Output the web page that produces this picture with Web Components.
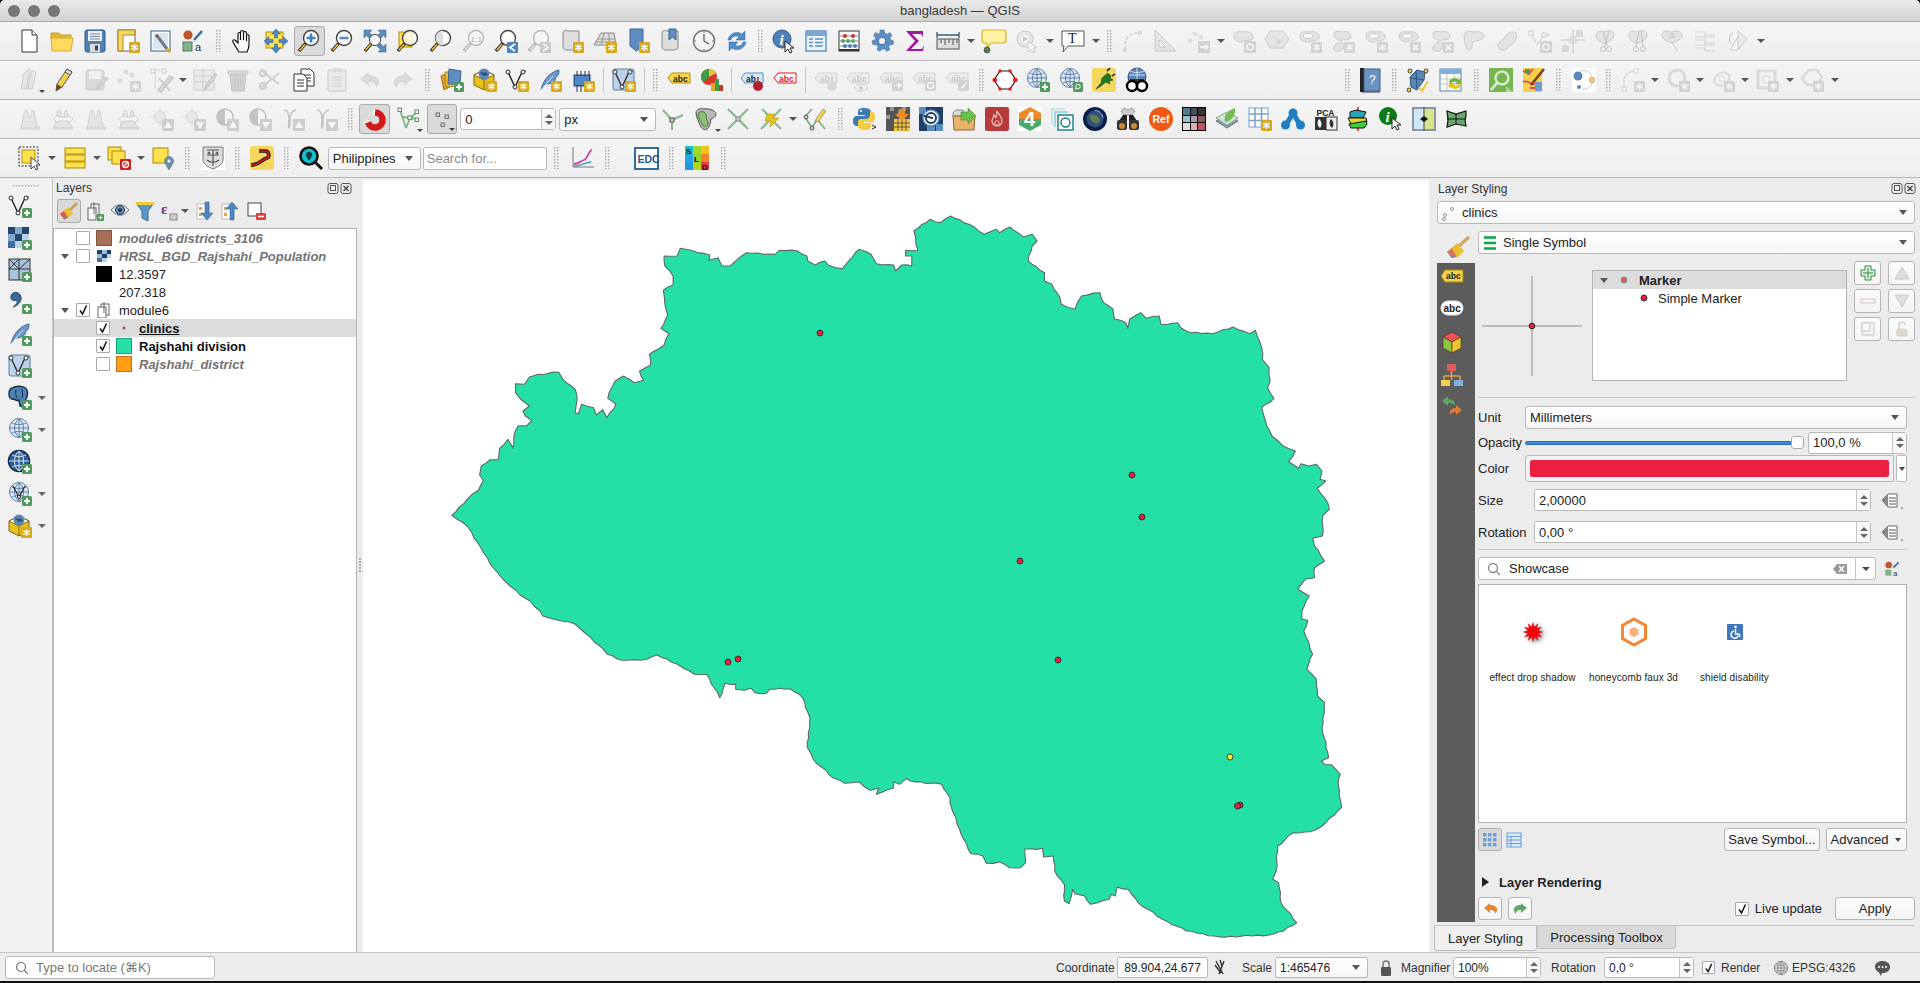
<!DOCTYPE html>
<html>
<head>
<meta charset="utf-8">
<title>bangladesh — QGIS</title>
<style>
html { background: #111; }
body { margin: 0; height: 983px; overflow: hidden; font: 13px "Liberation Sans", Arial, sans-serif; color: #222; }
</style>
</head>
<body>
<q-window>
  <q-titlebar slot="title">bangladesh — QGIS</q-titlebar>

  <q-toolbar slot="tools" style="padding-left:12.5px">
    <q-tool i="new"></q-tool><q-tool i="open"></q-tool><q-tool i="save"></q-tool><q-tool i="layout"></q-tool><q-tool i="layoutmgr"></q-tool><q-tool i="stylemgr"></q-tool>
    <q-grip w="17"></q-grip>
    <q-tool i="hand"></q-tool><q-tool i="pansel"></q-tool><q-tool i="zoomin" on></q-tool><q-tool i="zoomout"></q-tool><q-tool i="zoomfull"></q-tool><q-tool i="zoomsel"></q-tool><q-tool i="zoomlayer"></q-tool><q-tool i="zoom11" off></q-tool><q-tool i="zoomlast"></q-tool><q-tool i="zoomnext" off></q-tool><q-tool i="mapview"></q-tool><q-tool i="map3d"></q-tool><q-tool i="bookmarknew"></q-tool><q-tool i="bookmarks"></q-tool><q-tool i="clock"></q-tool><q-tool i="refresh"></q-tool>
    <q-grip w="14"></q-grip>
    <q-tool i="identify"></q-tool><q-tool i="table"></q-tool><q-tool i="abacus"></q-tool><q-tool i="gear"></q-tool><q-tool i="sigma"></q-tool><q-tool i="ruler"></q-tool><q-drop></q-drop><q-tool i="tip"></q-tool><q-tool i="action" off></q-tool><q-drop></q-drop><q-tool i="annot"></q-tool><q-drop></q-drop>
    <q-grip w="14"></q-grip>
    <q-tool i="nodecurve" off></q-tool><q-tool i="setsquare" off></q-tool><q-tool i="ptsarrow" off></q-tool><q-drop></q-drop>
    <q-tool i="blobback" off></q-tool><q-tool i="blobhole" off></q-tool><q-tool i="blobstar" off></q-tool><q-tool i="blobsstar" off></q-tool><q-tool i="ringstar" off></q-tool><q-tool i="ringx" off></q-tool><q-tool i="blobsx" off></q-tool><q-tool i="blob" off></q-tool><q-tool i="leaf" off></q-tool><q-tool i="vertexloop" off></q-tool><q-tool i="split" off></q-tool><q-tool i="scissor" off></q-tool><q-tool i="scissor2" off></q-tool><q-tool i="merge" off></q-tool><q-tool i="rowsgrid" off></q-tool><q-tool i="rotate" off></q-tool><q-drop></q-drop>
  </q-toolbar>

  <q-toolbar slot="tools" style="padding-left:13.5px">
    <q-tool i="pencils" off small></q-tool><q-tool i="pencil"></q-tool><q-tool i="saveedit" off></q-tool><q-tool i="ptsstar" off></q-tool><q-tool i="xtool" off></q-tool><q-drop w="11"></q-drop><q-tool i="edittable" off></q-tool><q-tool i="trash" off></q-tool><q-tool i="cut" off></q-tool><q-tool i="copy"></q-tool><q-tool i="paste" off></q-tool><q-tool i="undo" off></q-tool><q-tool i="redo" off></q-tool>
    <q-grip w="16"></q-grip>
    <q-tool i="addlayers"></q-tool><q-tool i="gpkg"></q-tool><q-tool i="vstar"></q-tool><q-tool i="featherstar"></q-tool><q-tool i="chip"></q-tool>
    <q-sep w="8"></q-sep>
    <q-tool i="vbox"></q-tool>
    <q-sep w="8"></q-sep><q-grip w="14"></q-grip>
    <q-tool i="abcy"></q-tool><q-tool i="pie"></q-tool><q-sep w="7"></q-sep><q-tool i="abpin"></q-tool><q-tool i="abcr"></q-tool><q-sep w="8"></q-sep>
    <q-tool i="abpinoff" off></q-tool><q-tool i="abeye" off></q-tool><q-tool i="abarrow" off></q-tool><q-tool i="abloop" off></q-tool><q-tool i="abbrush" off></q-tool>
    <q-grip w="15"></q-grip>
    <q-tool i="hexred"></q-tool><q-tool i="wmsplus"></q-tool><q-tool i="wmssearch"></q-tool><q-tool i="plug"></q-tool><q-tool i="globebino"></q-tool>
    <q-gap w="187"></q-gap>
    <q-grip w="14"></q-grip><q-tool i="help"></q-tool><q-grip w="15"></q-grip><q-tool i="leafcheck"></q-tool><q-tool i="tablesync"></q-tool><q-grip w="17"></q-grip><q-tool i="osmsearch"></q-tool><q-tool i="mapbrush"></q-tool><q-grip w="17"></q-grip><q-tool i="orbit"></q-tool><q-grip w="16"></q-grip>
    <q-tool i="curvestar" off></q-tool><q-drop w="12"></q-drop><q-tool i="circlestar" off></q-tool><q-drop w="12"></q-drop><q-tool i="ellipsestar" off></q-tool><q-drop w="12"></q-drop><q-tool i="rectstar" off></q-tool><q-drop w="12"></q-drop><q-tool i="polystar" off></q-tool><q-drop w="12"></q-drop>
  </q-toolbar>

  <q-toolbar slot="tools" style="padding-left:13.5px">
    <q-tool i="hills" off></q-tool><q-tool i="hillsarrow" off></q-tool><q-tool i="hills" off></q-tool><q-tool i="hillsarrow" off></q-tool><q-tool i="sunup" off></q-tool><q-tool i="sundown" off></q-tool><q-tool i="contrastup" off></q-tool><q-tool i="contrastdown" off></q-tool><q-tool i="gammaup" off></q-tool><q-tool i="gammadown" off></q-tool>
    <q-grip w="16"></q-grip>
    <q-tool i="magnet" on></q-tool><q-tool i="topology" small></q-tool><q-gap w="3"></q-gap>
    <q-tool i="dots" on small style="width:30px"></q-tool><q-gap w="3"></q-gap>
    <q-spin style="width:96px">0</q-spin><q-gap w="3"></q-gap>
    <q-combo style="width:97px">px</q-combo>
    <q-tool i="trimy"></q-tool><q-tool i="shapeg" small></q-tool><q-tool i="crossg"></q-tool><q-tool i="bolt"></q-tool><q-drop w="11"></q-drop><q-tool i="linepen"></q-tool>
    <q-grip w="17"></q-grip>
    <q-tool i="python"></q-tool><q-tool i="rasterarrow"></q-tool><q-tool i="bluetile"></q-tool><q-tool i="foldergreen"></q-tool><q-tool i="flame"></q-tool><q-tool i="hex4"></q-tool><q-tool i="teal"></q-tool><q-tool i="earth"></q-tool><q-tool i="binoc"></q-tool><q-tool i="refo"></q-tool><q-tool i="matrix"></q-tool><q-tool i="stackleaf"></q-tool><q-tool i="gridstar"></q-tool><q-tool i="bluea"></q-tool><q-tool i="pca"></q-tool><q-tool i="strata"></q-tool><q-tool i="greeni"></q-tool><q-tool i="splitview"></q-tool><q-tool i="greenmap"></q-tool>
  </q-toolbar>

  <q-toolbar slot="tools" style="padding-left:13.5px">
    <q-tool i="selectrect"></q-tool><q-drop w="12"></q-drop><q-tool i="selectrows"></q-tool><q-drop w="11"></q-drop><q-tool i="deselect"></q-tool><q-drop w="11"></q-drop><q-tool i="selectpin"></q-tool>
    <q-grip w="17"></q-grip><q-tool i="crest"></q-tool><q-grip w="17"></q-grip><q-tool i="road"></q-tool><q-grip w="16"></q-grip><q-tool i="geosearch"></q-tool>
    <q-combo style="width:93px">Philippines</q-combo><q-gap w="2"></q-gap>
    <q-input style="width:124px;color:#8a8a8a">Search for...</q-input>
    <q-grip w="20"></q-grip><q-tool i="chart"></q-tool><q-grip w="16"></q-grip><q-gap w="14"></q-gap><q-tool i="edc"></q-tool><q-grip w="18"></q-grip><q-tool i="sld"></q-tool><q-grip w="20"></q-grip>
  </q-toolbar>

  <q-sidebar slot="left">
    <q-tool i="vplus" tall></q-tool><q-tool i="rasterplus" tall></q-tool><q-tool i="meshplus" tall></q-tool><q-tool i="commaplus" tall></q-tool><q-tool i="featherplus" tall></q-tool><q-tool i="vboxplus" tall></q-tool>
    <q-tool i="pg" tall drop></q-tool><q-tool i="wmsplus" tall drop></q-tool><q-tool i="globedark" tall></q-tool><q-tool i="wfs" tall drop></q-tool><q-tool i="gpkg" tall drop></q-tool>
  </q-sidebar>

  <q-dock slot="layers" title="Layers">
    <q-layer-tools></q-layer-tools>
    <q-tree>
      <q-row lvl="0" box swatch="#a76f58" dim>module6 districts_3106</q-row>
      <q-row lvl="0" arrow box ic="rastersmall" dim>HRSL_BGD_Rajshahi_Population</q-row>
      <q-row lvl="0" swatch="#000">12.3597</q-row>
      <q-row lvl="0" swatch="#fff" noborder>207.318</q-row>
      <q-row lvl="0" arrow box checked ic="groupsmall" plain>module6</q-row>
      <q-row lvl="1" box checked ic="dotsmall" bold under selected>clinics</q-row>
      <q-row lvl="1" box checked swatch="#24dfa6" bold>Rajshahi division</q-row>
      <q-row lvl="1" box swatch="#ff9d17" dim>Rajshahi_district</q-row>
    </q-tree>
  </q-dock>

  <q-map slot="map"></q-map>

  <q-styling slot="right"></q-styling>

  <q-statusbar slot="status"></q-statusbar>
</q-window>

<script>
const define = (tag, css, html) => customElements.define(tag, class extends HTMLElement {
  constructor() {
    super();
    this.attachShadow({mode: 'open'}).innerHTML = `<style>${css}</style>${html}`;
  }
});

// shared icon pieces
const STAR = `<g transform="translate(13,13)"><rect width="11" height="11" rx="1" fill="#d8a81e"/><path d="M5.5 2v7M2.3 3.7l6.4 3.6M8.7 3.7L2.3 7.3" stroke="#fff" stroke-width="1.4"/></g>`;
const PLUS = `<g transform="translate(14,14)"><rect width="10" height="10" rx="1.5" fill="#4f9a5d"/><path d="M5 2v6M2 5h6" stroke="#fff" stroke-width="2"/></g>`;
const GSTAR = `<g transform="translate(13,13)"><rect width="11" height="11" rx="1" fill="#999"/><path d="M5.5 2v7M2.3 3.7l6.4 3.6M8.7 3.7L2.3 7.3" stroke="#fff" stroke-width="1.4"/></g>`;
const GX = `<g transform="translate(13,13)"><rect width="11" height="11" rx="1" fill="#999"/><path d="M3 3l5 5M8 3l-5 5" stroke="#fff" stroke-width="1.8"/></g>`;
const lens = (inner = '', fill = '#fff') => `<circle cx="14" cy="9" r="7.5" fill="${fill}" stroke="#444" stroke-width="1.4"/>${inner}<path d="M8.5 14.5L2 22" stroke="#222" stroke-width="3.4"/><path d="M8 15.2L2.8 21.2" stroke="#f2c230" stroke-width="1.7"/>`;
const V = (c = '#222') => `<path d="M3 4l7 15 7-15" fill="none" stroke="${c}" stroke-width="1.4"/><circle cx="3" cy="4" r="2" fill="#fff" stroke="${c}"/><circle cx="10" cy="19" r="2" fill="#fff" stroke="${c}"/><path d="M17 4l4-1" stroke="${c}"/><circle cx="18" cy="4" r="2" fill="#fff" stroke="${c}"/>`;
const FEATHER = `<path d="M3 22C5 12 12 4 21 2c0 5-2 7-4 8 1 1 0 3-2 4-3 2-6 2-8 2z" fill="#6d97c9" stroke="#41699c"/><path d="M3 22L15 8" stroke="#dce8f6"/>`;
const GLOBE = `<circle cx="11" cy="10" r="9.5" fill="#dfe8f4" stroke="#5c7ea8"/><path d="M2 10h18M11 1v18M4 5c4 2 10 2 14 0M4 15c4-2 10-2 14 0M11 1c-6 4-6 14 0 18M11 1c6 4 6 14 0 18" fill="none" stroke="#5c7ea8"/>`;
const BOX = `<path d="M11 2l10 5v10l-10 5-10-5V7z" fill="#e8c21b" stroke="#7a6510"/><path d="M1 7l10 5 10-5-10-5z" fill="#fff" stroke="#7a6510"/><circle cx="11" cy="6" r="5.5" fill="#5d87b5"/><path d="M7 5c2-2 4 1 6-1l2 3-4 1z" fill="#2f4f75"/><path d="M11 12v10" stroke="#7a6510"/>`;
const ABCTAG = (fill, stroke, txt = 'abc', tc = '#222') => `<path d="M1 10l4-5h18v10H5z" fill="${fill}" stroke="${stroke}"/><text x="6" y="13.5" font-size="8.5" font-weight="700" fill="${tc}">${txt}</text>`;
const BLOB = `<path d="M2 7c0-4 5-5 9-4 4-1 10 0 10 5 0 4-5 3-8 4-3 2-11 1-11-5z" fill="#c8c8c8" stroke="#777"/>`;
const RING = `<path d="M2 7c0-4 5-5 9-4 4-1 10 0 10 5 0 4-5 3-8 4-3 2-11 1-11-5z" fill="#c8c8c8" stroke="#777"/><ellipse cx="10" cy="7" rx="5" ry="2.5" fill="#fff" stroke="#777"/>`;
const TWOBLOBS = `<path d="M3 5c0-3 5-3 8-2 4-1 9 0 9 4 0 3-3 4-7 4-4 1-10 0-10-6z" fill="#c8c8c8" stroke="#777"/><path d="M3 18c1-4 6-6 9-4 2 2 1 8-4 8-3 0-6 0-5-4z" fill="#c8c8c8" stroke="#777"/>`;
const HILL = `<path d="M2 21c3 0 3-18 6-18s2 10 4 8 1-8 3-8 2 18 7 18z" fill="#ccc" stroke="#888"/><path d="M2 22h20" stroke="#888"/>`;
const SUN = `<circle cx="10" cy="10" r="5.5" fill="#e4d28a" stroke="#b09b50"/><path d="M10 1v3M10 16v3M1 10h3M3.5 3.5l2 2M16.5 3.5l-2 2M3.5 16.5l2-2" stroke="#b09b50"/>`;
const CONTRAST = `<circle cx="10" cy="10" r="8" fill="#fff" stroke="#555" stroke-width="1.4"/><path d="M10 2a8 8 0 0 0 0 16z" fill="#666"/>`;
const GAMMA = `<path d="M3 3c4 0 5 5 5 9s-1 9 0 9 1-5 1-9 2-9 6-9" fill="none" stroke="#666" stroke-width="1.5"/>`;
const UPBOX = `<g transform="translate(12,12)"><rect width="12" height="12" rx="1" fill="#888"/><path d="M6 2l4 7H2z" fill="#fff"/></g>`;
const DOWNBOX = `<g transform="translate(12,12)"><rect width="12" height="12" rx="1" fill="#888"/><path d="M6 10l4-7H2z" fill="#fff"/></g>`;
const PAGE = `<path d="M5 1h10l5 5v17H5z" fill="#fff" stroke="#333"/><path d="M15 1v5h5" fill="#eee" stroke="#333"/>`;
const SCROLL = `<path d="M3 3c2-2 3-2 5-1h11v17c-2 2-4 2-6 2H7c-2 0-4-1-4-3z" fill="#dedede" stroke="#888"/>`;

const ICONS = {
  new: PAGE,
  open: `<path d="M1 6V4h8l2 2h10v4H1z" fill="#e3b73a" stroke="#c79a22"/><path d="M1 9h22l-2 13H2z" fill="#ffda5e" stroke="#d8a93a"/>`,
  save: `<rect x="2" y="1" width="20" height="22" rx="2" fill="#4f7fb3" stroke="#2f5d8f"/><rect x="5" y="2" width="14" height="10" fill="#edf1f6"/><path d="M7 5h10M7 7.5h10M7 10h10" stroke="#7b8a9c"/><rect x="7" y="15" width="10" height="8" fill="#dcdcdc"/><rect x="12" y="16.5" width="3" height="5" fill="#345"/>`,
  layout: `<rect x="2" y="1" width="17" height="21" fill="#fff" stroke="#666"/><path d="M2 1h17v5H7v16H2z" fill="#f6d860" stroke="#a8892c"/>${STAR}`,
  layoutmgr: `<rect x="2" y="2" width="19" height="20" fill="#fff" stroke="#3b5a86"/><rect x="4" y="4" width="15" height="16" fill="#dbe6f5"/><path d="M9 8l9 12" stroke="#777" stroke-width="3"/><path d="M7 6l2 2" stroke="#555" stroke-width="3"/><path d="M18 20l3 3" stroke="#d8a81e" stroke-width="3"/>`,
  stylemgr: `<circle cx="7" cy="6" r="4.6" fill="#c1562b"/><path d="M13 11l8-9" stroke="#3a6ea5" stroke-width="2.5"/><rect x="2" y="13" width="9" height="9" fill="#7fb08a" stroke="#5b7a63"/><text x="14" y="22" font-size="11" fill="#333">a</text>`,
  hand: `<path d="M8 23c-2-3-5-8-6-10-1-2 1-3 2.5-1.5L7 14V5c0-2 2.5-2 2.5 0v6V3c0-2 3-2 3 0v8V4c0-2 3-2 3 0v8-5c0-2 2.5-2 2.5 0v9c0 3-1 5-2 7z" fill="#fff" stroke="#111" stroke-width="1.2"/>`,
  pansel: `<rect x="2" y="3" width="17" height="16" fill="#ffe14d" stroke="#b09000"/><path d="M12 0l4.5 5h-3v4h-3V5h-3zM12 24l4.5-5h-3v-4h-3v4h-3zM0 12l5-4.500v3h4v3H5v3zM24 12l-5-4.500v3h-4v3h4v3z" fill="#4f86c0" stroke="#2c5d8f" stroke-width=".5"/>`,
  zoomin: lens(`<path d="M14 4.5v9M9.500 9h9" stroke="#3f7fbf" stroke-width="2.6"/>`),
  zoomout: lens(`<path d="M9.500 9h9" stroke="#5a8ab8" stroke-width="2.6"/>`),
  zoomfull: `<path d="M1 1h8L6.5 3.5 10 7 7 10 3.5 6.5 1 9zM23 1v8l-2.5-2.5L17 10l-3-3 3.5-3.5L15 1zM23 23h-8l2.5-2.5L14 17l3-3 3.5 3.5L23 15z" fill="#5b8dbf" stroke="#2c5d8f" stroke-width=".5"/><circle cx="12" cy="11" r="5.5" fill="#fff" stroke="#444"/><path d="M8 15l-6 7" stroke="#222" stroke-width="3.4"/><path d="M7.5 15.5l-5 5.5" stroke="#f2c230" stroke-width="1.7"/>`,
  zoomsel: `<rect x="3" y="3" width="13" height="15" fill="#ffe14d" stroke="#b09000"/>${lens('', 'rgba(255,255,255,.8)')}`,
  zoomlayer: lens(`<path d="M14 1.5a7.500 7.500 0 0 0 0 15z" fill="#ddd"/>`),
  zoom11: lens(`<text x="8.5" y="12.5" font-size="8" font-weight="700" fill="#555">1:1</text>`),
  zoomlast: lens() + `<rect x="13" y="13" width="11" height="11" fill="#4a85c2"/><path d="M21 15l-5 3.5 5 3.5" stroke="#fff" fill="none" stroke-width="1.8"/>`,
  zoomnext: lens() + `<rect x="13" y="13" width="11" height="11" fill="#4a85c2"/><path d="M16 15l5 3.5-5 3.5" stroke="#fff" fill="none" stroke-width="1.8"/>`,
  mapview: `${SCROLL}${STAR}`,
  map3d: `<path d="M1 16L8 4h13l2 12z" fill="#ddd" stroke="#888"/><path d="M5 10h17M2 13h21M11 4l-3 12M16 4v12" stroke="#999"/>${STAR}`,
  bookmarknew: `<path d="M4 0h13v17l-6.5 5L4 17z" fill="#5f8dc2" stroke="#3a6494"/>${STAR}`,
  bookmarks: `${SCROLL}<path d="M10 0h7v11l-3.5-3L10 11z" fill="#5f8dc2" stroke="#3a6494"/>`,
  clock: `<circle cx="12" cy="12" r="10.5" fill="#f3f3f3" stroke="#777" stroke-width="1.4"/><path d="M12 5v7l5 3" stroke="#555" stroke-width="1.2" fill="none"/><path d="M12 2v2M12 20v2M2 12h2M20 12h2" stroke="#777"/>`,
  refresh: `<path d="M3 11C4 5 11 1 17 5l3-3v9h-9l3-3C11 6 7 7 6 11z" fill="#4f8cc9" stroke="#2c6299" stroke-width=".5"/><path d="M21 13c-1 6-8 10-14 6l-3 3v-9h9l-3 3c3 2 7 1 8-3z" fill="#4f8cc9" stroke="#2c6299" stroke-width=".5"/>`,
  identify: `<circle cx="10" cy="10" r="9" fill="#4f7fb8" stroke="#2d588c"/><text x="7.5" y="15.5" font-size="15" font-weight="700" font-style="italic" fill="#fff" font-family="Liberation Serif">i</text><path d="M13 12v11l3-3 2 4 2-1-2-4h4z" fill="#fff" stroke="#222"/>`,
  table: `<rect x="2" y="2" width="20" height="20" fill="#eef4fb" stroke="#5b8dc0" stroke-width="1.4"/><rect x="2" y="2" width="20" height="5" fill="#7ba6d4"/><path d="M5 10h4M5 13.5h4M5 17h4M11 10h8M11 13.5h8M11 17h8" stroke="#5b8dc0" stroke-width="1.5"/>`,
  abacus: `<rect x="2" y="2" width="20" height="20" fill="#fff" stroke="#333"/><path d="M2 21h20" stroke="#333" stroke-width="2"/><path d="M3 7h18M3 12h18M3 17h18" stroke="#888"/><g fill="#c0392b"><circle cx="8" cy="7" r="2"/><circle cx="16" cy="7" r="2"/></g><g fill="#5ba56a"><circle cx="6" cy="12" r="2"/><circle cx="11" cy="12" r="2"/><circle cx="16" cy="12" r="2"/></g><g fill="#4f7fb8"><circle cx="8" cy="17" r="2"/><circle cx="13" cy="17" r="2"/><circle cx="18" cy="17" r="2"/></g>`,
  gear: `<path d="M10 1h4l.6 3 2.6 1.200L20 3.600 22 6.400l-2 2.200.6 2.400 2.900 1-.5 3.400-3 .2-1.400 2.200 1.200 2.800-3 1.600-2-2.300-2.800 0-2 2.300-3-1.600 1.200-2.800L5.800 15.600l-3-.2L2 12l3-1 .6-2.400-2-2.200L5.600 3.600l2.800 1.600L10 4z" fill="#5d8fc6" stroke="#3a6a9e" stroke-width=".6"/><circle cx="12" cy="12" r="3.8" fill="#f0f0f0" stroke="#3a6a9e"/>`,
  sigma: `<path d="M3 2h17v6l-2-3H9l7 7-8 8h11l2-4-1 6H3l9-10z" fill="#a0169c"/>`,
  ruler: `<rect x="1" y="10" width="22" height="10" fill="#ddd" stroke="#555"/><path d="M5 10v4M9 10v6M13 10v4M17 10v6M21 10v4" stroke="#555"/><path d="M1 6h22M1 3v6M23 3v6" stroke="#3c5b7a" stroke-width="1.3"/>`,
  tip: `<path d="M3 1h18c2 0 3 1 3 3v7c0 2-1 3-3 3H9l-4 5v-5H3c-2 0-3-1-3-3V4c0-2 1-3 3-3z" fill="#fff3a3" stroke="#d3b32b" stroke-width="1.2"/><circle cx="5" cy="21" r="3" fill="#5b7f4f" stroke="#333" stroke-width=".6"/>`,
  action: `<circle cx="10" cy="10" r="8" fill="#ccc" stroke="#777"/><circle cx="10" cy="10" r="4" fill="#fff"/><path d="M8 7l5 3-5 3z" fill="#777"/><path d="M13 12v11l3-3 2 4 2-1-2-4h4z" fill="#fff" stroke="#888"/>`,
  annot: `<path d="M1 2h22v15H7l-5 6 1-6H1z" fill="#fff" stroke="#555"/><text x="7" y="14" font-size="14" font-family="Liberation Serif" fill="#222">T</text>`,
  nodecurve: `<path d="M4 20C3 10 8 4 18 4" fill="none" stroke="#777" stroke-dasharray="3 2" stroke-width="1.4"/><rect x="2" y="19" width="4" height="4" fill="#aaa"/><rect x="17" y="2" width="4" height="4" fill="#aaa"/>`,
  setsquare: `<path d="M2 1v21h21zM6 11l7 7H6z" fill="#ccc" fill-rule="evenodd" stroke="#777"/>`,
  ptsarrow: `<circle cx="4" cy="12" r="2.5" fill="#bbb"/><circle cx="9" cy="5" r="2.5" fill="#bbb"/><circle cx="15" cy="8" r="2.5" fill="#bbb"/><rect x="12" y="12" width="12" height="12" fill="#999"/><path d="M14 17h5v-3l4 4-4 4v-3h-5z" fill="#fff"/>`,
  blobback: `${BLOB}<g transform="translate(12,12)"><rect width="12" height="12" rx="1" fill="#999"/><circle cx="6" cy="6" r="3" fill="none" stroke="#fff" stroke-width="1.5"/></g>`,
  blobhole: `<path d="M5 2h13l6 8-6 9H5L0 10z" fill="#ccc" stroke="#888"/><path d="M8 7l7 7M15 14h-4M15 14v-4" stroke="#888"/>`,
  blobstar: `${RING}${GSTAR}`,
  blobsstar: `${TWOBLOBS}${GSTAR}`,
  ringstar: `${RING}${GSTAR}`,
  ringx: `${RING}${GX}`,
  blobsx: `${TWOBLOBS}${GX}`,
  blob: `<path d="M2 7c0-5 6-5 10-4 4-1 10 0 10 4 0 5-8 4-11 6-1 3-1 8-4 8S2 12 2 7z" fill="#c8c8c8" stroke="#777"/>`,
  leaf: `<path d="M3 16c1-4 6-5 8-9s7-5 10-3c2 4-1 8-3 10-3 3-7 8-12 7-3-1-3-3-3-5z" fill="#c8c8c8" stroke="#777"/>`,
  vertexloop: `<path d="M3 4l6 12 7-10h6" fill="none" stroke="#aaa" stroke-width="1.4"/><rect x="1" y="2" width="4" height="4" fill="#fff" stroke="#888"/><rect x="14" y="4" width="4" height="4" fill="#fff" stroke="#888"/><g transform="translate(12,12)"><rect width="12" height="12" rx="1" fill="#999"/><circle cx="6" cy="6" r="3" fill="none" stroke="#fff" stroke-width="1.5"/></g>`,
  split: `<path d="M0 11h24M12 0v24" stroke="#999" stroke-width="1.5"/><rect x="9" y="8" width="6" height="6" fill="none" stroke="#888"/><rect x="15" y="1" width="7" height="7" fill="#aaa"/><rect x="1" y="16" width="7" height="7" fill="#aaa"/>`,
  scissor: `<path d="M2 6c0-4 5-5 8-3 3-2 10-2 10 3s-5 6-8 8c-5 0-10-2-10-8z" fill="#c8c8c8" stroke="#777"/><path d="M9 2l4 15M15 2l-4 15" stroke="#666"/><circle cx="9" cy="20" r="2.5" fill="none" stroke="#666"/><circle cx="15" cy="20" r="2.5" fill="none" stroke="#666"/>`,
  scissor2: `<path d="M2 6c0-4 5-5 8-3 3-2 10-2 10 3s-5 6-8 8c-5 0-10-2-10-8z" fill="#c8c8c8" stroke="#777"/><path d="M12 2l-3 15M14 2l2 15" stroke="#666"/><circle cx="9" cy="20" r="2.5" fill="none" stroke="#666"/><circle cx="16" cy="20" r="2.5" fill="none" stroke="#666"/>`,
  merge: `<path d="M2 6c0-4 5-5 9-3 4-2 11-1 11 3 0 4-5 6-9 8-5-1-11-3-11-8z" fill="#c8c8c8" stroke="#777"/><path d="M8 5h8M8 8h8M12 3v6M12 14c2 3 4 5 5 8" stroke="#777" fill="none"/>`,
  rowsgrid: `<path d="M2 3h9l2 3h9M2 8h20M2 11h9l2 3h9M2 16h20M2 19h9l2 3h9M12 2v20" fill="none" stroke="#999"/>`,
  rotate: `<path d="M12 21V2l9 8z" fill="#ddd" stroke="#888"/><path d="M12 21L4 21l8-13z" fill="#fff" stroke="#888"/><path d="M7 4C3 7 2 11 5 15" fill="none" stroke="#777" stroke-width="1.2"/>`,

  pencils: `<path d="M3 21l3-16 5-4 2 3-3 16zM8 21l3-15 5-4 2 3-4 16z" fill="#ccc" stroke="#888"/>`,
  pencil: `<path d="M5 23l1-7L16 1l5 3-10 15z" fill="#f2d14b" stroke="#555"/><path d="M5 23l1-7 5 3z" fill="#6b4a22"/><path d="M16 1l5 3-2 3-5-3z" fill="#ddd" stroke="#555"/>`,
  saveedit: `<rect x="2" y="2" width="18" height="20" rx="2" fill="#aaa" stroke="#888"/><rect x="5" y="3" width="12" height="8" fill="#eee"/><path d="M12 22l2-6 8-7 2 2-8 8z" fill="#999" stroke="#777"/>`,
  ptsstar: `<circle cx="3" cy="13" r="2.5" fill="#aaa"/><circle cx="9" cy="4" r="2.5" fill="#aaa"/><circle cx="15" cy="7" r="2.5" fill="#aaa"/>${GSTAR}`,
  xtool: `<path d="M2 2h14M5 2v19" stroke="#999" fill="none"/><rect x="1" y="1" width="4" height="4" fill="#fff" stroke="#888"/><rect x="12" y="1" width="4" height="4" fill="#fff" stroke="#888"/><path d="M8 22l12-14 3 2-12 14zM9 10l11 13" stroke="#777" stroke-width="1.5" fill="#aaa"/>`,
  edittable: `<rect x="1" y="2" width="20" height="20" fill="#ddd" stroke="#888"/><path d="M1 8h20M1 14h20M10 2v20" stroke="#888"/><path d="M11 23l2-6 9-12 2 2-9 12z" fill="#999" stroke="#666"/>`,
  trash: `<path d="M4 7h16l-2 16H6z" fill="#b88" stroke="#766"/><path d="M2 3h20v3H2zM9 10v10M12 10v10M15 10v10" fill="#aaa" stroke="#766"/>`,
  cut: `<path d="M3 3l17 13M3 19L20 5" stroke="#888" stroke-width="2"/><circle cx="4" cy="5" r="3" fill="none" stroke="#888" stroke-width="2"/><circle cx="4" cy="18" r="3" fill="none" stroke="#888" stroke-width="2"/>`,
  copy: `<path d="M9 1h9l4 4v13H9z" fill="#fff" stroke="#333"/><path d="M12 7h7M12 10h7M12 13h7" stroke="#333"/><path d="M2 6h9l4 4v13H2z" fill="#fff" stroke="#333"/><path d="M5 12h7M5 15h7M5 18h7" stroke="#333"/>`,
  paste: `<rect x="3" y="2" width="18" height="21" rx="1" fill="#ddd" stroke="#777"/><rect x="8" y="0" width="8" height="4" fill="#aaa"/><path d="M7 9h10M7 12h10M7 15h10M7 18h10" stroke="#888"/>`,
  undo: `<path d="M11 3L2 11l9 7v-4c4 0 7 1 7 6 3-3 4-6 2-9s-5-4-9-4z" fill="#aaa"/>`,
  redo: `<path d="M13 3l9 8-9 7v-4c-4 0-7 1-7 6-3-3-4-6-2-9s5-4 9-4z" fill="#aaa"/>`,
  addlayers: `<path d="M1 8l9-4 3 13-9 5z" fill="#e79a2e" stroke="#a66a14"/><path d="M5 4h11l1 14-11 1z" fill="#e9c033" stroke="#a68a14"/><path d="M9 1l12 2-1 13-12 0z" fill="#5f8dc2" stroke="#3a6494"/>${PLUS}`,
  gpkg: `${BOX}${STAR}`,
  vstar: `${V()}${STAR}`,
  featherstar: `${FEATHER}${STAR}`,
  chip: `<rect x="3" y="7" width="16" height="11" fill="#3f77b8" stroke="#274f80"/><path d="M6 3v21M10 3v21M14 3v21M18 3v10" stroke="#333"/><rect x="4" y="8" width="14" height="9" fill="#4f87c6"/>${STAR}`,
  vbox: `<rect x="1" y="1" width="21" height="21" rx="2" fill="#bcd2ea" stroke="#557da8"/>${V('#333')}${STAR}`,
  abcy: ABCTAG('#f9d54a', '#b09000'),
  pie: `<circle cx="9" cy="9" r="8" fill="#d83b2e"/><path d="M9 9V1a8 8 0 0 1 7 4z" fill="#f2c230"/><path d="M9 9L3 14a8 8 0 0 1-2-5z" fill="#3c9f4a"/><path d="M9 9L1 9a8 8 0 0 1 8-8z" fill="#3c9f4a"/><rect x="11" y="15" width="4" height="8" fill="#e6a81e"/><rect x="15" y="11" width="4" height="12" fill="#3c9f4a"/><rect x="19" y="17" width="4" height="6" fill="#c0392b"/>`,
  abpin: `${ABCTAG('#d7e8fa', '#4f8cc9', 'ab')}<path d="M18 9v6" stroke="#777" stroke-width="2"/><circle cx="18" cy="18" r="5" fill="#b11f2c"/>`,
  abcr: ABCTAG('#fff', '#e0171f', 'abc', '#e0171f'),
  abpinoff: `${ABCTAG('#ddd', '#999', 'ab', '#777')}<path d="M18 9v6" stroke="#888" stroke-width="2"/><circle cx="18" cy="18" r="5" fill="#aaa"/>`,
  abeye: `${ABCTAG('#ddd', '#999', 'abc', '#777')}<path d="M8 20c4-5 10-5 14 0-4 4-10 4-14 0z" fill="#fff" stroke="#888"/><circle cx="15" cy="20" r="2" fill="#888"/>`,
  abarrow: `${ABCTAG('#ddd', '#999', 'abc', '#777')}<rect x="13" y="12" width="11" height="11" fill="#999"/><path d="M15 17h4v-3l4 3.5-4 3.500v-3h-4z" fill="#fff"/>`,
  abloop: `${ABCTAG('#ddd', '#999', 'abc', '#777')}<rect x="13" y="12" width="11" height="11" fill="#999"/><circle cx="18.5" cy="17.5" r="3" fill="none" stroke="#fff" stroke-width="1.5"/>`,
  abbrush: `${ABCTAG('#ddd', '#999', 'abc', '#777')}<rect x="13" y="12" width="11" height="11" fill="#999"/><path d="M15 21l2-3 5-4-3 5z" fill="#fff"/>`,
  hexred: `<path d="M7 3h10l6 9-6 9H7L1 12z" fill="#fff" stroke="#222" stroke-width="1.2"/><g fill="#e61717"><circle cx="7" cy="3" r="1.7"/><circle cx="17" cy="3" r="1.7"/><circle cx="17" cy="21" r="1.7"/><circle cx="7" cy="21" r="1.7"/><circle cx="1.8" cy="12" r="2.3"/><circle cx="22.2" cy="12" r="2.3"/></g>`,
  wmsplus: `${GLOBE}${PLUS}`,
  wmssearch: `${GLOBE}<g transform="translate(14,14)"><rect width="10" height="10" rx="1.5" fill="#4f9a5d"/><circle cx="5" cy="4.5" r="2.2" fill="none" stroke="#fff"/><path d="M3.5 6L2 8" stroke="#fff"/></g>`,
  plug: `<rect x="0" y="0" width="24" height="24" rx="3" fill="#f5d75e"/><path d="M4 21l5-6 1-5 6-5 3 3-1 2 3 2-4 1 1 3-4-2-4 3-1 1z" fill="#1e7a1e" stroke="#0c3d0c" stroke-width=".6"/><path d="M15 3l3-3M20 8l3-2" stroke="#111" stroke-width="1.5"/>`,
  globebino: `<circle cx="12" cy="9" r="9" fill="#5a84b5" stroke="#2d5380"/><path d="M4 7h16M12 0v18M5 3c4 2 10 2 14 0" stroke="#d3e1f1" fill="none"/><path d="M5 11h14v4H5z" fill="#333"/><circle cx="7" cy="18" r="5" fill="#fff" stroke="#000" stroke-width="2.4"/><circle cx="17" cy="18" r="5" fill="#fff" stroke="#000" stroke-width="2.4"/>`,
  help: `<rect x="2" y="0" width="4" height="24" fill="#222"/><rect x="6" y="1" width="16" height="22" fill="#6b93c2" stroke="#3a5f8a"/><text x="11" y="16" font-size="12" fill="#fff">?</text><path d="M4 24h18" stroke="#333"/>`,
  leafcheck: `<path d="M4 9L11 2l8 2-1 8-7 10-6-3z" fill="#5d87b5" stroke="#2d5380"/><path d="M10 3l1 17M5 10l13 2" stroke="#2d5380"/><circle cx="4" cy="3" r="2" fill="#f2d14b" stroke="#444"/><circle cx="20" cy="3" r="2" fill="#f2d14b" stroke="#444"/><circle cx="3" cy="22" r="2" fill="#f2d14b" stroke="#444"/><path d="M13 19l3 4 6-10" fill="none" stroke="#f2c230" stroke-width="2"/>`,
  tablesync: `<rect x="1" y="1" width="21" height="22" fill="#fffbe6" stroke="#4f86c0"/><rect x="1" y="1" width="21" height="5" fill="#7fb1df"/><path d="M1 11h21M1 16h21M8 6v17M15 6v17" stroke="#b9c9dc"/><path d="M10 14c1-4 7-5 10-2l2-2v6h-6l2-2c-2-1-5-1-6 2z" fill="#6cb33f"/><path d="M22 17c-1 4-7 5-10 2l-2 2v-6h6l-2 2c2 1 5 1 6-2z" fill="#e8c21b"/>`,
  osmsearch: `<rect width="24" height="24" fill="#78b654"/><circle cx="13" cy="10" r="6.5" fill="none" stroke="#e6f3dc" stroke-width="2.2"/><path d="M8 15l-6 7" stroke="#e6f3dc" stroke-width="2.6"/><path d="M17 18l7 6h-7z" fill="#a6d98b"/>`,
  mapbrush: `<rect x="1" y="0" width="19" height="24" fill="#f4cf4a"/><path d="M1 3l6 3 4-5M1 14c5-3 8 4 13 2M8 20h10" stroke="#d9486b" stroke-width="1.8" fill="none"/><rect x="3" y="1" width="5" height="4" fill="#4aa14a"/><rect x="13" y="14" width="7" height="9" fill="#6e9bd0"/><path d="M9 17L22 1" stroke="#7a4320" stroke-width="2.6"/>`,
  orbit: `<rect width="24" height="24" fill="#fff"/><circle cx="6" cy="8" r="4.5" fill="#5d87b5"/><circle cx="7" cy="19" r="2" fill="#5d87b5"/><circle cx="20" cy="12" r="2" fill="none" stroke="#ef9a2a" stroke-width="1.4"/><path d="M8 3c6-2 11 1 12 7M20 15c-1 5-5 7-10 6" fill="none" stroke="#ccc"/>`,
  curvestar: `<path d="M3 21V13C3 7 8 3 15 3" fill="none" stroke="#aaa" stroke-width="1.5"/><rect x="1" y="19" width="4" height="4" fill="#fff" stroke="#999"/><rect x="13" y="1" width="4" height="4" fill="#fff" stroke="#999"/>${GSTAR}`,
  circlestar: `<circle cx="11" cy="10" r="8" fill="none" stroke="#aaa" stroke-width="3"/>${GSTAR}`,
  ellipsestar: `<ellipse cx="11" cy="11" rx="8" ry="6" fill="none" stroke="#aaa" stroke-width="2" transform="rotate(-30 11 11)"/><circle cx="11" cy="11" r="3" fill="none" stroke="#aaa"/>${GSTAR}`,
  rectstar: `<rect x="3" y="3" width="17" height="17" fill="none" stroke="#aaa" stroke-width="3"/><rect x="8" y="8" width="7" height="7" fill="none" stroke="#aaa"/>${GSTAR}`,
  polystar: `<path d="M9 2h8l5 7-4 8H7L2 10z" fill="none" stroke="#aaa" stroke-width="2.5"/>${GSTAR}`,

  hills: HILL,
  hillsarrow: `${HILL}<path d="M2 12l5-4v2h10V8l5 4-5 4v-2H7v2z" fill="#fff" stroke="#888"/>`,
  sunup: `${SUN}${UPBOX}`, sundown: `${SUN}${DOWNBOX}`,
  contrastup: `${CONTRAST}${UPBOX}`, contrastdown: `${CONTRAST}${DOWNBOX}`,
  gammaup: `${GAMMA}${UPBOX}`, gammadown: `${GAMMA}${DOWNBOX}`,
  magnet: `<path d="M12 5.500a7.500 7.500 0 1 1-7 10" fill="none" stroke="#d41818" stroke-width="6.500"/><path d="M8 4.500l4 1M2.500 12l1.500 3.500" stroke="#f2f2f2" stroke-width="5"/><path d="M8.500 2l.3 5.500M1 13.500l5.500-1.500" stroke="#999" stroke-width=".4"/>`,
  topology: `<path d="M4 3l6 18M10 21l4-10 7-6M14 11l7 1M7 10l7 1" fill="none" stroke="#7bb582" stroke-width="1.8"/><g fill="#fff" stroke="#5b8c62"><rect x="2" y="1" width="3.5" height="3.5"/><rect x="12" y="9" width="3.5" height="3.5"/><rect x="19" y="3" width="3.5" height="3.5"/><rect x="19" y="11" width="3.5" height="3.5"/></g>`,
  dots: `<g fill="#cfcfcf" stroke="#777"><rect x="6" y="6" width="3.5" height="3.5"/><rect x="15" y="8" width="3.5" height="3.5"/><rect x="11" y="16" width="3.5" height="3.5"/></g>`,
  trimy: `<path d="M11 13L2 3M11 13v10M11 13l11-5" stroke="#86b98e" stroke-width="2" fill="none"/><rect x="9" y="11" width="4" height="4" fill="#ccc" stroke="#555"/>`,
  shapeg: `<path d="M2 6c0-4 5-5 8-4 3-1 12 1 12 5 0 3-3 4-5 5-1 4-1 8-4 10s-6-1-7-4-4-8-4-12z" fill="#b8b8b8" stroke="#555"/><path d="M4 8c0-3 3-4 6-3 2 1 3 3 2 5l2 6c0 3-3 5-5 3-1-2-5-8-5-11z" fill="#8ebd7a" stroke="#4d7f3c"/>`,
  crossg: `<path d="M2 2l20 20M22 2L2 22" stroke="#86b98e" stroke-width="2.2"/><rect x="10" y="10" width="4" height="4" fill="#ccc" stroke="#888"/>`,
  bolt: `<path d="M2 22L22 2M3 2l7 7M15 15l7 7" stroke="#86b98e" stroke-width="2"/><path d="M8 7h7l-1 4h6l-9 9 1-6H6z" fill="#e5c21e" stroke="#a08410" stroke-width=".5"/>`,
  linepen: `<path d="M2 10l7 11 5-9 8 10M2 10l7-8" fill="none" stroke="#7bb582" stroke-width="1.8"/><circle cx="9" cy="21" r="2" fill="#ccc" stroke="#555"/><circle cx="3" cy="10" r="2" fill="#ccc" stroke="#555"/><path d="M13 12l7-10 3 2-7 10-3 1z" fill="#f2d14b" stroke="#777" stroke-width=".6"/>`,
  python: `<path d="M11 1c-5 0-6 2-6 4v3h7v1H4c-2 0-4 1-4 5s2 5 4 5h2v-3c0-2 2-4 4-4h5c2 0 3-1 3-3V5c0-2-2-4-7-4z" fill="#3d7ab3"/><path d="M12 23c5 0 6-2 6-4v-3h-7v-1h8c2 0 3-1 3-5s-2-5-3-5h-2v3c0 2-2 4-4 4H8c-2 0-3 1-3 3v4c0 2 2 4 7 4z" fill="#f4cd3f"/><circle cx="8" cy="4" r="1" fill="#fff"/><path d="M19 18l4 2-4 2" fill="none" stroke="#333"/>`,
  rasterarrow: `<rect x="0" y="0" width="24" height="24" fill="#555"/><path d="M4 0h4v4H4zM12 4h4v4h-4zM0 8h4v4H0zM8 12h4v4H8zM16 0h4v4h-4z" fill="#999"/><path d="M8 12h16v12H8z" fill="#f4c542"/><path d="M8 16h16M8 20h16M12 12v12M16 12v12M20 12v12" stroke="#333" stroke-width=".7"/><path d="M13 2h6v5h4l-7 7-7-7h4z" fill="#ef8c28"/>`,
  bluetile: `<rect width="24" height="24" fill="#1f3f66"/><path d="M0 0h7v7H0zM17 17h7v7h-7zM8 16h8v8H8z" fill="#5b8cbf"/><circle cx="12" cy="11" r="8" fill="#fff" stroke="#5b8cbf" stroke-width="1.5"/><circle cx="12" cy="11" r="5" fill="#fff" stroke="#1f3f66" stroke-width="2"/><path d="M5 9c4 0 6 2 9 2" stroke="#1f3f66" stroke-width="2"/>`,
  foldergreen: `<path d="M1 6l3-3h7l2 3v3H1z" fill="#ddd" stroke="#888"/><path d="M1 9h22l-1 14H2z" fill="#e8b36b" stroke="#8a6a35"/><path d="M9 5h7V1l8 8-8 8v-4H9z" fill="#69c14a" stroke="#3f8a28" stroke-width=".6"/>`,
  flame: `<rect x="0" y="0" width="24" height="24" rx="2" fill="#b83b3b"/><path d="M12 4c1 3 5 5 5 10a5 5 0 0 1-10 0c0-3 2-3 2-6 1 1 2 2 2 3 1-2 1-5 1-7z" fill="none" stroke="#eec5b8" stroke-width="1.2"/><circle cx="12" cy="16" r="2.2" fill="none" stroke="#eec5b8"/>`,
  hex4: `<rect width="24" height="24" fill="#fff"/><path d="M12 0l11 6v6H1V6z" fill="#ef8c28"/><path d="M1 12h22v6l-11 6-11-6z" fill="#4fa86a"/><text x="6" y="19" font-size="20" font-weight="700" fill="#fff">4</text>`,
  teal: `<path d="M1 1h14v2H3v14H1z" fill="#c8e4ea"/><path d="M4 4h14v2H6v14H4z" fill="#a9d5dd"/><rect x="8" y="8" width="15" height="15" fill="#fff" stroke="#157a85" stroke-width="1.4"/><circle cx="15.5" cy="15.5" r="4.5" fill="none" stroke="#157a85" stroke-width="1.4"/>`,
  earth: `<circle cx="12" cy="12" r="12" fill="#0b1e4a"/><circle cx="12" cy="12" r="8.5" fill="#2f4f7a"/><path d="M6 9c3-3 7-1 9 1s3 5 0 6-7-1-9-7z" fill="#5d7e4f"/><path d="M12 3.5c4 0 7 3 8 7" stroke="#9ec3e6" fill="none"/>`,
  binoc: `<path d="M8 1l4 2 4-2 3 3-3 4H8L5 4z" fill="#ccc" stroke="#999"/><path d="M7 8h4v6H3zM13 8h4l4 6h-8z" fill="#222"/><rect x="1" y="13" width="10" height="10" rx="2" fill="#333"/><rect x="13" y="13" width="10" height="10" rx="2" fill="#333"/><circle cx="6" cy="19" r="3" fill="#c88a3a"/><circle cx="18" cy="19" r="3" fill="#c88a3a"/>`,
  refo: `<circle cx="12" cy="12" r="12" fill="#f05a14"/><text x="3.5" y="16" font-size="10.5" font-weight="700" fill="#fff">Ref</text>`,
  matrix: `<rect width="24" height="24" fill="#000"/><g><rect x="1" y="1" width="7" height="7" fill="#4f7d8f"/><rect x="9" y="1" width="6" height="7" fill="#40505f"/><rect x="16" y="1" width="7" height="7" fill="#3a3030"/><rect x="1" y="9" width="7" height="6" fill="#9dc2d0"/><rect x="9" y="9" width="6" height="6" fill="#a89aa6"/><rect x="16" y="9" width="7" height="6" fill="#8a5a62"/><rect x="1" y="16" width="7" height="7" fill="#e0e0e0"/><rect x="9" y="16" width="6" height="7" fill="#d6b4b4"/><rect x="16" y="16" width="7" height="7" fill="#c0545e"/></g>`,
  stackleaf: `<path d="M1 14l11-6 11 6-11 7z" fill="#8e9aa5" stroke="#6b7680"/><path d="M1 11l11-6 11 6-11 7z" fill="#cfe7d8" stroke="#88a898"/><path d="M10 15C8 8 13 3 20 1c1 7-3 13-10 14z" fill="#76bb55"/>`,
  gridstar: `<rect x="1" y="1" width="19" height="19" fill="#fff" stroke="#7ca0c8"/><path d="M7 1v19M13.5 1v19M1 7h19M1 13.5h19" stroke="#7ca0c8" stroke-width="1.5"/>${STAR}`,
  bluea: `<path d="M5 18L12 6l7 12" fill="none" stroke="#1f7fc4" stroke-width="5"/><circle cx="12" cy="6" r="4.5" fill="#1f7fc4"/><circle cx="4.5" cy="18" r="4.5" fill="#1f7fc4"/><circle cx="19.5" cy="18" r="4.5" fill="#1f7fc4"/>`,
  pca: `<text x="2.5" y="8.5" font-size="8.5" font-weight="700" fill="#222">PCA</text><rect x="1" y="10" width="11" height="13" fill="#333"/><rect x="12" y="10" width="11" height="13" fill="#eee" stroke="#333"/><path d="M5 12c3 2 3 7 1 9-3-2-3-7-1-9z" fill="#fff"/><path d="M17 12c3 2 3 7 1 9-3-2-3-7-1-9z" fill="#333"/>`,
  strata: `<path d="M12 0v24" stroke="#e01212" stroke-width="1.5"/><path d="M4 5l6-2 10 2-3 6H4z" fill="#2aa3b8" stroke="#111"/><path d="M2 11h18l1 4-16 2z" fill="#e8d91e" stroke="#111"/><path d="M3 17l17-3 1 3-3 4H5z" fill="#3fce3f" stroke="#111"/>`,
  greeni: `<circle cx="9" cy="9" r="9" fill="#0b7a17"/><text x="6.5" y="14.5" font-size="15" font-weight="700" font-style="italic" fill="#fff" font-family="Liberation Serif">i</text><path d="M13 11v11l3-3 2 4 2-1-2-4h4z" fill="#fff" stroke="#222"/>`,
  splitview: `<rect x="0" y="0" width="24" height="24" fill="#8c95a3"/><rect x="2" y="2" width="10" height="20" fill="#cfe6f7"/><rect x="12" y="2" width="10" height="20" fill="#d5e58a"/><path d="M12 0v24" stroke="#444"/><path d="M12 9l-4 3 4 3zM12 9l4 3-4 3z" fill="#111"/>`,
  greenmap: `<path d="M2 4l9 3 10-3v5l-1 4 1 6-10-2-9 3 1-7z" fill="#6ba76e" stroke="#111" stroke-width="1.2"/><path d="M2 12h19M11 7v10" stroke="#111"/>`,

  selectrect: `<rect x="1" y="1" width="19" height="19" fill="none" stroke="#222" stroke-dasharray="2 1.5"/><rect x="4" y="4" width="13" height="13" fill="#ffe14d" stroke="#b09000"/><path d="M13 11v12l3-3 2 4 2-1-2-4h4z" fill="#fff" stroke="#444"/>`,
  selectrows: `<g fill="#ffe14d" stroke="#a88a00"><rect x="2" y="2" width="20" height="6"/><rect x="2" y="9" width="20" height="6"/><rect x="2" y="16" width="20" height="6"/></g>`,
  deselect: `<rect x="1" y="1" width="13" height="13" fill="#ffe14d" stroke="#a88a00"/><rect x="5" y="5" width="13" height="13" fill="#ffe14d" stroke="#a88a00"/><rect x="13" y="13" width="11" height="11" rx="1" fill="#d61d1d"/><circle cx="18.5" cy="18.5" r="3" fill="none" stroke="#fff" stroke-width="1.3"/><path d="M16 21l5-5" stroke="#fff" stroke-width="1.3"/>`,
  selectpin: `<rect x="2" y="2" width="15" height="15" fill="#ffe14d" stroke="#a88a00"/><path d="M18 24l-4-7a4.500 4.500 0 1 1 8 0z" fill="#6a93a8" stroke="#4a6f82" stroke-width=".6"/><circle cx="18" cy="15" r="1.5" fill="#fff"/>`,
  crest: `<rect width="24" height="24" fill="#fff"/><path d="M2 1h20v13c0 4-5 7-10 9-5-2-10-5-10-9z" fill="#ddd" stroke="#777"/><path d="M6 4h12M6 9h12M12 4v16M6 14c3 3 9 3 12 0" stroke="#555" stroke-width="1.2" fill="none"/><circle cx="8" cy="7" r="1.5" fill="#666"/><circle cx="16" cy="7" r="1.5" fill="#666"/>`,
  road: `<rect width="24" height="24" rx="3" fill="#f5d75e"/><path d="M1 19C9 19 11 14 17 12c3-1 2-6-1-7H9" fill="none" stroke="#111" stroke-width="3.6"/><path d="M1 19C9 19 11 14 17 12c3-1 2-6-1-7H9" fill="none" stroke="#e0201b" stroke-width="1.7"/>`,
  geosearch: `<circle cx="10" cy="10" r="8.5" fill="#12c3d6" stroke="#111" stroke-width="2.6"/><path d="M16 16l7 7" stroke="#111" stroke-width="3"/><path d="M10 15l-3-5a3.200 3.200 0 1 1 6 0z" fill="#173b3f"/>`,
  chart: `<path d="M2 1v20h21" fill="none" stroke="#777"/><path d="M3 18c6 0 6-3 10-4 4-1 4-9 8-10" fill="none" stroke="#c43aa3" stroke-width="1.8"/><path d="M3 20c6 0 10-3 17-4" fill="none" stroke="#3aa0b8" stroke-width="1.5"/>`,
  edc: `<rect x="1" y="2" width="23" height="21" fill="#fff" stroke="#1f5c8f" stroke-width="1.8"/><text x="3.5" y="17" font-size="10.5" font-weight="700" fill="#1f5c8f">EDC</text>`,
  sld: `<rect width="8" height="8" fill="#12c3d6"/><rect x="8" width="8" height="8" fill="#a6d62a"/><rect x="16" width="8" height="8" fill="#f4c31a"/><rect y="8" width="8" height="8" fill="#22a5e2"/><rect x="8" y="8" width="8" height="8" fill="#8fd42a"/><rect x="16" y="8" width="8" height="8" fill="#f2832a"/><rect y="16" width="8" height="8" fill="#1f9adf"/><rect x="8" y="16" width="8" height="8" fill="#b0d61e"/><rect x="16" y="16" width="8" height="8" fill="#e23b4a"/><text x="1" y="7.5" font-size="8" font-weight="700">S</text><text x="9" y="15.5" font-size="8" font-weight="700">L</text><text x="17" y="23.5" font-size="8" font-weight="700">D</text>`,

  vplus: `${V()}${PLUS}`,
  rasterplus: `<rect x="0" y="1" width="7" height="7" fill="#24476f"/><rect x="7" y="1" width="7" height="7" fill="#84a6cc"/><rect x="14" y="1" width="7" height="7" fill="#24476f"/><rect x="0" y="8" width="7" height="7" fill="#84a6cc"/><rect x="7" y="8" width="7" height="7" fill="#24476f"/><rect x="14" y="8" width="7" height="7" fill="#bcd0e6"/><rect x="0" y="15" width="7" height="7" fill="#3f6ea3"/><rect x="7" y="15" width="7" height="7" fill="#bcd0e6"/>${PLUS}`,
  meshplus: `<rect x="1" y="1" width="21" height="21" fill="#a9c2dd" stroke="#333"/><path d="M1 11h21M11 1v21M1 1l10 10M11 1l-10 10M22 1L11 11" stroke="#333" fill="none"/>${PLUS}`,
  commaplus: `<path d="M3 6c1-5 9-5 10 1 1 5-4 9-8 10 3-2 5-4 4-7-2 1-7 1-6-4z" fill="#3a6898" stroke="#244a70"/>${PLUS}`,
  featherplus: `${FEATHER}${PLUS}`,
  vboxplus: `<rect x="1" y="1" width="21" height="21" rx="2" fill="#bcd2ea" stroke="#557da8"/>${V('#333')}${PLUS}`,
  pg: `<path d="M4 2c5-3 13-2 15 2 2 5-1 10-3 12l-1 5-3-1-1-6c-2 1-4 0-5-1-3 1-5-1-5-5 0-3 1-5 3-6z" fill="#4f7fb3" stroke="#172c45" stroke-width="1.4"/><path d="M8 4c-1 3 0 6 1 8M13 3c2 2 2 5 1 9" fill="none" stroke="#172c45"/>${PLUS}`,
  globedark: `<circle cx="11" cy="11" r="10.5" fill="#2b5d98" stroke="#122f50" stroke-width="1.5"/><path d="M1 11h20M11 1v20M4 5c4 2 10 2 14 0M4 17c4-2 10-2 14 0M11 1c-6 4-6 16 0 20M11 1c6 4 6 16 0 20" fill="none" stroke="#dfe8f4"/>${PLUS}`,
  wfs: `${GLOBE}<path d="M5 4l6 11 6-11" fill="none" stroke="#222" stroke-width="1.2"/><circle cx="11" cy="15" r="1.5" fill="#fff" stroke="#222"/>${PLUS}`
};

// window frame: title, toolbars, then docks around the canvas
define('q-window', `
  :host { display: grid; grid-template-rows: 22px auto 774px 30px; width: 1920px; height: 981px; background: #ececec; border-radius: 5px 5px 0 0; overflow: hidden; }
  .tools { display: flex; flex-direction: column; }
  .main { display: flex; min-height: 0; }
  .split { width: 6px; display: flex; align-items: center; justify-content: center; }
  .split i { width: 2px; height: 14px; background: radial-gradient(circle at 1px 1px, #aaa .8px, transparent 1px) 0 0 / 2px 3px; }
  .map { flex: none; padding-top: 2px; box-sizing: border-box; height: 774px; }
`, `
  <slot name="title"></slot>
  <div class="tools"><slot name="tools"></slot></div>
  <div class="main">
    <slot name="left"></slot>
    <slot name="layers"></slot>
    <div class="split"><i></i></div>
    <div class="map"><slot name="map"></slot></div>
    <slot name="right"></slot>
  </div>
  <slot name="status"></slot>
`);

define('q-titlebar', `
  :host { display: flex; align-items: center; justify-content: center; position: relative; box-sizing: border-box; height: 22px; background: linear-gradient(#ebebeb, #d2d2d2); border-bottom: 1px solid #aaa; color: #3a3a3a; font-size: 13px; }
  .lights { position: absolute; left: 8px; top: 5px; display: flex; gap: 8px; }
  .lights i { width: 12px; height: 12px; border-radius: 50%; background: #77777a; }
`, `<div class="lights"><i></i><i></i><i></i></div><slot></slot>`);

define('q-toolbar', `
  :host { display: flex; align-items: center; box-sizing: border-box; height: 39px; background: linear-gradient(#f5f5f5, #eeeeee); border-bottom: 1px solid #b4b4b4; }
`, `<slot></slot>`);

customElements.define('q-tool', class extends HTMLElement {
  constructor() {
    super();
    this.attachShadow({mode: 'open'});
  }
  connectedCallback() {
    const name = this.getAttribute('i');
    this.shadowRoot.innerHTML = `<style>
      :host { display: flex; align-items: center; justify-content: center; position: relative; flex: none; width: 32.9px; height: 30px; box-sizing: border-box; }
      :host([on]) { background: #dadada; border: 1px solid #a9a9a9; border-radius: 3px; }
      :host([on]:not([style])) { margin: 0 1px; width: 30.9px; }
      :host([tall]) { width: 42px; height: 32px; padding-right: 12px; }
      :host([off]) svg { filter: grayscale(1); opacity: .33; }
      svg { width: 24px; height: 24px; overflow: visible; }
      .mini, .d { position: absolute; width: 0; height: 0; border-left: 3px solid transparent; border-right: 3px solid transparent; border-top: 3px solid #444; }
      .mini { right: 1px; bottom: 2px; }
      .d { right: 1px; top: 14px; border-left-width: 4px; border-right-width: 4px; border-top-width: 4px; border-top-color: #666; }
    </style>
    <svg viewBox="0 0 24 24">${ICONS[name] || ''}</svg>
    ${this.hasAttribute('small') ? '<i class="mini"></i>' : ''}
    ${this.hasAttribute('drop') ? '<i class="d"></i>' : ''}`;
  }
});

customElements.define('q-drop', class extends HTMLElement {
  constructor() {
    super();
    this.attachShadow({mode: 'open'}).innerHTML = `<style>
      :host { display: flex; align-items: center; justify-content: center; flex: none; height: 30px; }
      i { width: 0; height: 0; border-left: 4px solid transparent; border-right: 4px solid transparent; border-top: 4px solid #555; }
    </style><i></i>`;
  }
  connectedCallback() {
    this.style.width = (this.getAttribute('w') || 13) + 'px';
  }
});

customElements.define('q-grip', class extends HTMLElement {
  constructor() {
    super();
    this.attachShadow({mode: 'open'}).innerHTML = `<style>
      :host { display: flex; align-items: center; justify-content: center; flex: none; height: 30px; }
      i { width: 5px; height: 22px; background: radial-gradient(circle at .8px .8px, #b2b2b2 .7px, transparent .9px) 0 0 / 3px 3px; }
    </style><i></i>`;
  }
  connectedCallback() {
    this.style.width = this.getAttribute('w') + 'px';
  }
});

customElements.define('q-sep', class extends HTMLElement {
  constructor() {
    super();
    this.attachShadow({mode: 'open'}).innerHTML = `<style>
      :host { display: flex; justify-content: center; flex: none; height: 26px; }
      i { width: 1px; background: #c8c8c8; }
    </style><i></i>`;
  }
  connectedCallback() {
    this.style.width = this.getAttribute('w') + 'px';
  }
});

customElements.define('q-gap', class extends HTMLElement {
  connectedCallback() {
    this.style.cssText = `display:block;flex:none;width:${this.getAttribute('w')}px`;
  }
});

define('q-combo', `
  :host { display: flex; align-items: center; flex: none; box-sizing: border-box; height: 23px; padding: 0 4px; background: linear-gradient(#fff, #f6f6f6); border: 1px solid #b9b9b9; border-radius: 3px; gap: 6px; }
  .t { flex: 1; min-width: 0; white-space: nowrap; display: flex; align-items: center; gap: 6px; }
  i { width: 0; height: 0; margin: 0 3px; border-left: 4px solid transparent; border-right: 4px solid transparent; border-top: 5px solid #555; }
`, `<div class="t"><slot></slot></div><i></i>`);

define('q-input', `
  :host { display: flex; align-items: center; flex: none; box-sizing: border-box; height: 23px; padding: 0 3px; background: #fff; border: 1px solid #b9b9b9; border-radius: 2px; white-space: nowrap; overflow: hidden; }
`, `<slot></slot>`);

define('q-spin', `
  :host { display: flex; align-items: stretch; flex: none; box-sizing: border-box; height: 22px; background: #fff; border: 1px solid #b9b9b9; border-radius: 3px; }
  .v { flex: 1; min-width: 0; display: flex; align-items: center; padding: 0 4px; white-space: nowrap; }
  .a { width: 13px; flex: none; border-left: 1px solid #c4c4c4; background: #f8f8f8; display: flex; flex-direction: column; align-items: center; justify-content: center; gap: 3px; }
  .a i { width: 0; height: 0; border-left: 4px solid transparent; border-right: 4px solid transparent; }
  .a i:first-child { border-bottom: 4px solid #666; }
  .a i:last-child { border-top: 4px solid #666; }
`, `<div class="v"><slot></slot></div><div class="a"><i></i><i></i></div>`);

define('q-button', `
  :host { display: flex; align-items: center; justify-content: center; flex: none; box-sizing: border-box; height: 23px; background: linear-gradient(#fcfcfc, #f4f4f4); border: 1px solid #b4b4b4; border-radius: 3px; white-space: nowrap; gap: 6px; }
`, `<slot></slot>`);

define('q-check', `
  :host { display: flex; align-items: center; justify-content: center; flex: none; box-sizing: border-box; width: 14px; height: 14px; background: #fff; border: 1px solid #a8a8a8; border-radius: 1px; }
  svg { display: none; width: 12px; height: 12px; }
  :host([checked]) svg { display: block; }
`, `<svg viewBox="0 0 12 12"><path d="M3 6.5l2.5 3.5L9.5 1.5" fill="none" stroke="#111" stroke-width="1.5"/></svg>`);

define('q-sidebar', `
  :host { display: flex; flex-direction: column; align-items: center; box-sizing: border-box; flex: none; width: 53px; padding-top: 7px; background: #f1f1f1; border-right: 1px solid #c4c4c4; }
  .g { width: 26px; height: 3px; margin-bottom: 2px; background: radial-gradient(circle at .8px .8px, #b2b2b2 .7px, transparent .9px) 0 0 / 3px 3px; }
`, `<div class="g"></div><slot></slot>`);

const FLOAT_ICONS = `<svg viewBox="0 0 24 11" width="25" height="11"><rect x=".5" y=".5" width="10" height="10" rx="2" fill="#eee" stroke="#555"/><rect x="3" y="2.5" width="5" height="5" fill="none" stroke="#555"/><rect x="13.5" y=".5" width="10" height="10" rx="2" fill="#eee" stroke="#555"/><path d="M16 3l5 5M21 3l-5 5" stroke="#444" stroke-width="1.4"/></svg>`;

customElements.define('q-dock', class extends HTMLElement {
  constructor() {
    super();
    this.attachShadow({mode: 'open'});
  }
  connectedCallback() {
    this.shadowRoot.innerHTML = `<style>
      :host { display: flex; flex-direction: column; flex: none; width: 304px; height: 774px; }
      .head { display: flex; align-items: center; justify-content: space-between; height: 20px; padding: 0 5px 0 3px; flex: none; color: #333; font-size: 12px; }
    </style><div class="head"><span>${this.getAttribute('title')}</span>${FLOAT_ICONS}</div><slot></slot>`;
  }
});

const LAYER_TOOL = {
  brush: `<path d="M1 13l8-7 5 6-5 5z" fill="#e9c033"/><path d="M1 13l4-3 4 7-4 1z" fill="#d95b4a"/><path d="M4 16l3 2-2 1z" fill="#5f8dc2"/><path d="M11 9l7-7" stroke="#c9a05a" stroke-width="2.6"/>`,
  group: `<rect x="6" y="3" width="8" height="12" fill="#eee" stroke="#666"/><rect x="3" y="7" width="8" height="12" fill="#f6f6f6" stroke="#666"/><path d="M9 1v12" stroke="#666"/><rect x="12" y="13" width="7" height="7" rx="1" fill="#4f9a5d"/><path d="M15.5 14.5v4M13.5 16.5h4" stroke="#fff"/>`,
  eye: `<path d="M1 9c6-7 12-7 18 0-6 7-12 7-18 0z" fill="#dfe4ea" stroke="#777"/><circle cx="10" cy="9" r="4.5" fill="#5d87b5" stroke="#345"/><circle cx="10" cy="9" r="1.7" fill="#123"/>`,
  filter: `<path d="M1 2h18l-6 8v10l-6-3v-7z" fill="#5d98c9" stroke="#3a6a9e"/><rect x="1" y="1" width="18" height="3" fill="#f0c93a"/>`,
  eps: `<text x="1" y="13" font-size="15" fill="#6c2f7c" font-family="Liberation Serif">ε</text><rect x="10" y="13" width="7" height="6" fill="#ccc" stroke="#888"/>`,
  down: `<rect x="1" y="3" width="12" height="15" fill="#fff" stroke="#bbb"/><rect x="3" y="6" width="3" height="3" fill="#f0a030"/><rect x="3" y="12" width="3" height="3" fill="#f0a030"/><path d="M9 1h4v11h4l-6 7-6-7h4z" fill="#4f86c0" stroke="#2c5d8f" stroke-width=".5"/>`,
  up: `<rect x="1" y="3" width="12" height="15" fill="#fff" stroke="#bbb"/><rect x="3" y="6" width="3" height="3" fill="#f0a030"/><rect x="3" y="12" width="3" height="3" fill="#f0a030"/><path d="M9 19h4V8h4l-6-7-6 7h4z" fill="#4f86c0" stroke="#2c5d8f" stroke-width=".5"/>`,
  remove: `<rect x="2" y="2" width="13" height="13" fill="#fff" stroke="#444"/><rect x="10" y="12" width="10" height="7" rx="1" fill="#e23b3b"/><path d="M12 15.5h6" stroke="#fff" stroke-width="1.6"/>`
};
const layerIcon = n => `<svg viewBox="0 0 20 20" width="20" height="20">${LAYER_TOOL[n]}</svg>`;

define('q-layer-tools', `
  :host { display: flex; align-items: center; height: 24px; flex: none; padding-left: 4px; margin: 1px 0 3px; }
  b { display: flex; align-items: center; justify-content: center; width: 25px; height: 24px; box-sizing: border-box; flex: none; }
  b.on { background: #dadada; border: 1px solid #a9a9a9; border-radius: 3px; width: 24px; margin-right: 1px; }
  i { width: 0; height: 0; border-left: 4px solid transparent; border-right: 4px solid transparent; border-top: 4px solid #555; margin: 0 4px 0 -1px; }
`, `<b class="on">${layerIcon('brush')}</b><b>${layerIcon('group')}</b><b>${layerIcon('eye')}</b><b>${layerIcon('filter')}</b><b>${layerIcon('eps')}</b><i></i><b>${layerIcon('down')}</b><b>${layerIcon('up')}</b><b>${layerIcon('remove')}</b>`);

define('q-tree', `
  :host { display: block; flex: 1; margin-top: 2px; background: #fff; border: 1px solid #b4b4b4; border-bottom: none; box-sizing: border-box; }
`, `<slot></slot>`);

const SMALL = {
  rastersmall: `<svg viewBox="0 0 16 16" width="16" height="16"><rect x="1" y="2" width="5" height="4" fill="#1f3f66"/><rect x="11" y="2" width="4" height="4" fill="#1f3f66"/><rect x="6" y="2" width="5" height="4" fill="#9cb8d8"/><rect x="1" y="6" width="5" height="4" fill="#9cb8d8"/><rect x="6" y="6" width="5" height="4" fill="#1f3f66"/><rect x="11" y="6" width="4" height="4" fill="#bcd0e6"/><rect x="1" y="10" width="5" height="4" fill="#3f6ea3"/><rect x="6" y="10" width="5" height="4" fill="#bcd0e6"/></svg>`,
  groupsmall: `<svg viewBox="0 0 16 16" width="16" height="16"><rect x="5" y="2" width="8" height="11" fill="#fff" stroke="#666"/><rect x="2" y="5" width="8" height="11" fill="#fff" stroke="#666"/><path d="M8 0v11" stroke="#666"/></svg>`,
  dotsmall: `<svg viewBox="0 0 16 16" width="16" height="16"><circle cx="8" cy="8" r="1.5" fill="#c23a50"/></svg>`
};

customElements.define('q-row', class extends HTMLElement {
  constructor() {
    super();
    this.attachShadow({mode: 'open'});
  }
  connectedCallback() {
    const has = a => this.hasAttribute(a);
    const lvl = +this.getAttribute('lvl');
    const swatch = this.getAttribute('swatch');
    const ic = this.getAttribute('ic');
    const mark = swatch
      ? `<span class="sw" style="background:${swatch};${has('noborder') ? 'border-color:transparent' : ''}"></span>`
      : `<span class="ic">${SMALL[ic] || ''}</span>`;
    const isLegend = !has('box');
    this.shadowRoot.innerHTML = `<style>
      :host { display: flex; align-items: center; height: 18px; white-space: nowrap; }
      :host([selected]) { background: #dcdcdc; }
      :host([dim]) { color: #737373; font-style: italic; font-weight: 700; }
      :host([bold]) { font-weight: 700; color: #111; }
      :host([under]) .t { text-decoration: underline; }
      .a { width: 22px; flex: none; display: flex; justify-content: center; }
      .a i { width: 0; height: 0; border-left: 4px solid transparent; border-right: 4px solid transparent; border-top: 5px solid #555; }
      .l { width: ${lvl ? 20 : 0}px; flex: none; }
      .sw { width: 16px; height: 16px; box-sizing: border-box; border: 1px solid rgba(0,0,0,.25); flex: none; margin-left: 6px; }
      .ic { width: 16px; height: 16px; flex: none; margin-left: 6px; display: block; }
      .ic svg { display: block; }
      .t { margin-left: 7px; }
      .sp { width: 14px; flex: none; }
    </style>
    <span class="a">${has('arrow') ? '<i></i>' : ''}</span>
    <span class="l"></span>
    ${isLegend ? '<span class="sp"></span>' : `<q-check ${has('checked') ? 'checked' : ''}></q-check>`}
    ${mark}
    <span class="t"><slot></slot></span>`;
  }
});

// outline traced off the reference, one list per crop, then put in window coordinates
const COAST = [
  ...[[78,973],[115,925],[143,898],[155,868],[146,852],[150,825],[172,806],[192,806],[195,772],[215,745],[228,772],[230,735],[241,704],[262,704],[274,688],[258,675],[252,660],[268,645],[247,625],[234,605],[234,578],[256,580],[268,558],[290,550],[340,544],[350,565],[380,595],[385,625],[380,665],[388,668],[396,640],[425,650],[432,672],[448,656],[458,680],[480,640],[460,622],[470,590],[478,570],[498,555],[525,575],[548,568],[538,540],[565,522],[562,490],[585,473],[598,462],[610,428],[590,412],[607,372],[600,340],[596,298],[620,282],[620,255],[600,225],[598,195],[630,195],[638,172],[665,178],[710,192],[708,208],[730,200],[740,225],[760,225],[775,208],[800,185],[870,190],[880,178],[925,180],[948,195],[950,210],[968,222],[992,210],[1000,222],[1035,233],[1050,210],[1075,175],[1105,190],[1118,218],[1160,222],[1165,240],[1180,222],[1205,225],[1205,195],[1190,195],[1190,178],[1220,178],[1210,120],[1250,85],[1275,95],[1300,75],[1345,100],[1382,130],[1412,115],[1420,125],[1445,108],[1478,138],[1500,130],[1512,150],[1500,165],[1490,210],[1530,245],[1530,270],[1548,280]].map(([x, y]) => [420 + x / 2.45, 190 + y / 3]),
  ...[[757,320],[760,340],[797,355],[815,315],[865,305],[875,335],[900,355],[905,385],[935,395],[940,412],[945,385],[975,365],[990,382],[1025,375],[1030,400],[1075,395],[1085,412],[1110,425],[1170,428],[1225,408],[1270,428],[1285,418],[1302,470],[1304,505],[1322,530],[1325,570],[1318,590],[1335,622],[1302,650],[1312,690],[1330,735],[1360,765],[1393,780],[1375,812],[1402,832],[1408,818],[1430,825],[1450,820],[1465,840],[1460,865],[1475,870],[1452,892],[1475,925],[1485,955],[1468,972],[1466,1035],[1440,1042],[1445,1065],[1472,1110],[1445,1130],[1445,1160],[1420,1165],[1400,1195]].map(([x, y]) => [780 + x / 2.703, 190 + y / 3]),
  ...[[1440,25],[1463,45],[1448,90],[1448,115],[1460,118],[1452,150],[1470,220],[1458,265],[1478,295],[1480,345],[1495,365],[1490,440],[1503,530],[1488,540],[1495,550],[1510,552],[1527,580],[1523,610],[1530,680],[1490,735],[1465,752],[1430,755],[1398,795],[1395,870],[1388,895],[1400,905],[1405,965],[1437,1025],[1410,1050],[1380,1062],[1278,1068],[1210,1050],[1160,1015],[1110,965],[1090,925],[1067,918],[1063,945],[1055,940],[1050,955],[1012,970],[1000,945],[980,938],[975,925],[968,968],[958,960],[958,910],[938,870],[935,825],[915,828],[913,802],[876,805],[878,845],[868,860],[845,860],[825,843],[797,847],[790,825],[765,818],[745,760],[725,680],[722,650],[705,610],[640,600],[632,592],[618,610],[606,602],[605,622],[570,640],[575,622],[557,628],[535,603],[505,607],[480,590],[440,535],[428,500],[433,410],[418,350],[392,323],[350,325],[343,337],[320,335],[312,322],[297,328],[280,325],[280,310],[258,307],[247,350],[220,280],[195,280],[160,250],[118,222],[85,238],[45,238],[15,220],[0,195]].map(([x, y]) => [600 + x / 2.063, 580 + y / 3]),
  [585,632],[575,623],[557,619],[543,615],[540,610],[530,600],[520,594],[510,585],[500,575],[493.5,567],[481,547],[468,526]
];

// the real border is finer than the trace, so break up the long segments a little
const OUTLINE = COAST.flatMap(([x, y], i) => {
  const [nx, ny] = COAST[(i + 1) % COAST.length];
  const len = Math.hypot(nx - x, ny - y);
  const out = [[x, y]];
  const steps = Math.floor(len / 5);
  for (let s = 1; s < steps; s++) {
    const t = s / steps;
    const off = ((i * 7 + s * 13) % 5 - 2) * 0.35;
    out.push([x + (nx - x) * t - (ny - y) / len * off, y + (ny - y) * t + (nx - x) / len * off]);
  }
  return out;
}).map(p => p.map(n => n.toFixed(1)).join(',')).join(' ');

const CLINICS = [[820,332,'#e8203f'],[1132,474,'#e8203f'],[1142,516,'#e8203f'],[1020,560,'#e8203f'],[728,661,'#e8203f'],[738,658,'#e8203f'],[1058,659,'#e8203f'],[1230,756,'#f6ee1c'],[1240,804,'#e8203f'],[1237.5,805,'#e8203f']];

define('q-map', `
  :host { display: block; width: 1066px; height: 772px; background: #fff; }
  svg { display: block; }
`, `<svg viewBox="363 179 1066 772" width="1066" height="772">
  <polygon points="${OUTLINE}" fill="#24dfa6" stroke="#5c6b66" stroke-width="1.1" stroke-linejoin="round"/>
  ${CLINICS.map(([x, y, c]) => `<circle cx="${x}" cy="${y}" r="3" fill="${c}" stroke="#222" stroke-width=".8"/>`).join('')}
</svg>`);

const SIDE_ICONS = [
  `<path d="M1 9l4-6h18v12H5z" fill="#f6d04a" stroke="#a88a00"/><text x="6" y="12" font-size="8.5" font-weight="700" fill="#222">abc</text>`,
  `<rect x="1" y="2" width="22" height="14" rx="7" fill="#fff" stroke="#dfe8f5"/><text x="3.5" y="13" font-size="10" font-weight="700" fill="#222">abc</text>`,
  `<path d="M12 1l9 5-9 5-9-5z" fill="#f05050" stroke="#333" stroke-width=".6"/><path d="M3 6l9 5v11l-9-5z" fill="#8ec63f" stroke="#333" stroke-width=".6"/><path d="M21 6l-9 5v11l9-5z" fill="#f2c230" stroke="#333" stroke-width=".6"/>`,
  `<rect x="7" y="1" width="9" height="7" fill="#e25b5b"/><path d="M11.5 8v5M4 13h16M4 13v4M20 13v4M11.5 8v9" stroke="#e3a14b" stroke-width="1.5" fill="none"/><rect x="1" y="17" width="9" height="6" fill="#f2d14b"/><rect x="14" y="17" width="9" height="6" fill="#7fb1df"/>`,
  `<path d="M2 6l6-5v3c5 0 8 3 7 7-1-2-3-3-7-3v3z" fill="#5ea36a"/><path d="M22 15l-6-5v3c-5 0-7 3-6 7 1-2 3-3 6-3v3z" fill="#e47b35"/>`
];
const BRUSH = `<path d="M1 17l10-9 7 8-6 6z" fill="#e9c033"/><path d="M1 17l5-4 5 9-5 1z" fill="#d9735f"/><path d="M3 20l6 2-3 1z" fill="#5f8dc2"/><path d="M13 11l10-9" stroke="#cfa868" stroke-width="3.2"/>`;
const DD = `<svg viewBox="0 0 24 18" width="24" height="18"><path d="M2 9l6-6h9v13H8z" fill="#fff" stroke="#666"/><path d="M2 9l6-6v13z" fill="#888"/><path d="M9 7h7M9 10h7M9 13h7" stroke="#555"/><path d="M21 17h2" stroke="#666"/></svg>`;
const BURST = (() => {
  const pts = [];
  for (let i = 0; i < 24; i++) {
    const r = i % 2 ? 5.5 : 10.5, a = i * Math.PI / 12;
    pts.push((18 + r * Math.sin(a)).toFixed(1) + ',' + (18 - r * Math.cos(a)).toFixed(1));
  }
  return pts.join(' ');
})();

define('q-styling', `
  :host { display: flex; flex-direction: column; flex: none; width: 490px; height: 774px; box-sizing: border-box; padding: 0 4px 0 8px; }
  .head { display: flex; align-items: center; justify-content: space-between; height: 21px; padding-left: 1px; flex: none; color: #333; font-size: 12px; }
  .head svg { margin-right: -1px; }
  .dot3 { width: 14px; height: 12px; position: relative; flex: none; }
  .dot3 i { position: absolute; width: 2px; height: 2px; border: 1px solid #999; border-radius: 50%; }
  .body { display: flex; flex: 1; min-height: 0; margin-top: 7px; }
  .side { width: 38px; flex: none; display: flex; flex-direction: column; margin-right: 3px; height: 691px; }
  .side .first { height: 32px; display: flex; align-items: center; justify-content: center; flex: none; padding-left: 4px; }
  .side .rest { flex: 1; background: #5c5c5c; display: flex; flex-direction: column; align-items: center; padding: 4px 8px 0 0; gap: 8px; }
  .side svg { width: 24px; height: 24px; flex: none; }
  .col { flex: 1; display: flex; flex-direction: column; min-width: 0; }
  .sym { display: flex; margin-top: 7px; height: 136px; flex: none; }
  .prev { width: 100px; height: 100px; margin: 15px 10px 0 4px; flex: none; }
  .prev svg { display: block; }
  .tree { width: 255px; height: 111px; margin-top: 9px; background: #fff; border: 1px solid #b4b4b4; box-sizing: border-box; flex: none; }
  .tree div { display: flex; align-items: center; height: 18px; }
  .tree .m { background: #dcdcdc; font-weight: 700; }
  .tree svg { flex: none; }
  .btns { display: grid; grid-template-columns: 27px 27px; grid-auto-rows: 24px; gap: 4px 7px; margin-left: 7px; align-content: start; }
  .btns q-button { height: 24px; }
  .btns q-button.off svg { opacity: .35; }
  hr { border: 0; border-top: 1px solid #c8c8c8; margin: 0; flex: none; width: 437px; }
  .r { display: flex; align-items: center; flex: none; width: 429px; }
  .r label { flex: none; }
  .rail { flex: 1; height: 4px; background: #3f8ae0; border: 1px solid #2e68ad; border-radius: 2px; box-sizing: border-box; }
  .knob { width: 13px; height: 13px; background: #fff; border: 1px solid #aaa; border-radius: 3px; box-sizing: border-box; flex: none; margin-left: -1px; }
  .color { flex: 1; height: 27px; box-sizing: border-box; padding: 4px; background: #f2f2f2; border: 1px solid #b9b9b9; border-radius: 3px 0 0 3px; }
  .color i { display: block; height: 100%; border-radius: 2px; background: #e9203f; }
  .cd { width: 11px; height: 27px; margin-left: 2px; box-sizing: border-box; background: #fff; border: 1px solid #b9b9b9; border-radius: 2px; display: flex; align-items: center; justify-content: center; flex: none; }
  .cd i { width: 0; height: 0; border-left: 3px solid transparent; border-right: 3px solid transparent; border-top: 4px solid #444; }
  .search { display: flex; align-items: center; width: 398px; height: 23px; box-sizing: border-box; background: #fff; border: 1px solid #b9b9b9; border-radius: 3px; flex: none; }
  .search span { flex: 1; }
  .search .dd { width: 19px; align-self: stretch; border-left: 1px solid #c4c4c4; display: flex; align-items: center; justify-content: center; }
  .search .dd i { width: 0; height: 0; border-left: 4px solid transparent; border-right: 4px solid transparent; border-top: 4px solid #444; }
  .list { width: 429px; height: 239px; margin-top: 4px; background: #fff; border: 1px solid #b4b4b4; box-sizing: border-box; flex: none; display: flex; padding-left: 3px; }
  .item { width: 101px; display: flex; flex-direction: column; align-items: center; font-size: 10px; letter-spacing: .1px; white-space: nowrap; padding-top: 29px; flex: none; }
  .item svg { width: 36px; height: 36px; flex: none; margin-bottom: 22px; overflow: visible; }
  .foot { display: flex; align-items: center; width: 429px; margin-top: 5px; flex: none; }
  .foot .vb { width: 24px; height: 23px; display: flex; align-items: center; justify-content: center; box-sizing: border-box; flex: none; }
  .foot .vb.on { background: #dadada; border: 1px solid #b0b0b0; border-radius: 3px; }
  .lr { display: flex; align-items: center; margin-top: 21px; height: 20px; flex: none; font-weight: 700; gap: 10px; padding-left: 4px; }
  .lr i { width: 0; height: 0; border-top: 5px solid transparent; border-bottom: 5px solid transparent; border-left: 7px solid #222; }
  .act { display: flex; align-items: center; margin-top: 5px; flex: none; height: 23px; }
  .tabs { display: flex; flex: none; align-items: flex-start; margin: 4px 0 0 -3px; border-top: 1px solid #c4c4c4; height: 27px; width: 481px; box-sizing: border-box; }
  .tab { height: 25px; box-sizing: border-box; display: flex; align-items: center; justify-content: center; flex: none; }
  .tab.a { width: 103px; height: 25px; background: #efefef; border: 1px solid #bdbdbd; border-top: none; border-radius: 0 0 3px 3px; }
  .tab.b { width: 139px; height: 23px; background: #d9d9d9; border: 1px solid #c4c4c4; border-top: none; border-radius: 0 0 3px 3px; }
`, `
  <div class="head"><span>Layer Styling</span>${FLOAT_ICONS}</div>
  <q-combo style="width:478px;margin-top:2px"><span class="dot3"><i style="left:1px;top:6px"></i><i style="left:8px;top:0"></i><i style="left:0;top:10px"></i></span>clinics</q-combo>
  <div class="body">
    <div class="side">
      <div class="first"><svg viewBox="0 0 24 24">${BRUSH}</svg></div>
      <div class="rest">${SIDE_ICONS.map(s => `<svg viewBox="0 0 24 24">${s}</svg>`).join('')}</div>
    </div>
    <div class="col">
      <q-combo style="width:437px"><svg width="14" height="14" viewBox="0 0 14 14"><path d="M1 1.5h12M1 7h12M1 12.5h12" stroke="#0aa54a" stroke-width="2.6"/></svg>Single Symbol</q-combo>
      <div class="sym">
        <div class="prev"><svg width="100" height="100" viewBox="0 0 100 100"><path d="M50 0v100M0 50h100" stroke="#8a8a8a"/><circle cx="50" cy="50" r="2.8" fill="#e8203f" stroke="#222"/></svg></div>
        <div class="tree">
          <div class="m"><svg width="46" height="18" viewBox="0 0 46 18"><path d="M7 7h8l-4 5z" fill="#555"/><circle cx="31" cy="9" r="3" fill="#d8606d" stroke="#888"/></svg>Marker</div>
          <div><svg width="65" height="18" viewBox="0 0 65 18"><circle cx="51" cy="9" r="3" fill="#e8203f" stroke="#333"/></svg>Simple Marker</div>
        </div>
        <div class="btns">
          <q-button><svg width="16" height="16" viewBox="0 0 16 16"><path d="M5 1h6v4h4v6h-4v4H5v-4H1V5h4z" fill="#dff0e2" stroke="#2f8a45"/><path d="M8 3v10M3 8h10" stroke="#2f8a45"/></svg></q-button>
          <q-button class="off"><svg width="16" height="14" viewBox="0 0 16 14"><path d="M8 1l7 12H1z" fill="#aab0b8" stroke="#777"/></svg></q-button>
          <q-button class="off"><svg width="16" height="14" viewBox="0 0 16 14"><rect x="1" y="5" width="14" height="4" fill="#eee" stroke="#a66"/></svg></q-button>
          <q-button class="off"><svg width="16" height="14" viewBox="0 0 16 14"><path d="M8 13L15 1H1z" fill="#aab0b8" stroke="#777"/></svg></q-button>
          <q-button class="off"><svg width="16" height="16" viewBox="0 0 16 16"><rect x="2" y="2" width="12" height="12" fill="#eee" stroke="#666"/><path d="M2 2h8v8H2z" fill="#fff" stroke="#666"/></svg></q-button>
          <q-button class="off"><svg width="16" height="16" viewBox="0 0 16 16"><rect x="3" y="8" width="10" height="7" rx="1" fill="#b8a68c" stroke="#887"/><path d="M5 8V4a3 3 0 0 1 6 0" fill="none" stroke="#888" stroke-width="1.4"/></svg></q-button>
        </div>
      </div>
      <hr>
      <div class="r" style="margin-top:8px"><label style="width:47px">Unit</label><q-combo style="flex:1">Millimeters</q-combo></div>
      <div class="r" style="margin-top:3px;height:21px"><label style="width:47px">Opacity</label><div class="rail"></div><div class="knob"></div><q-spin style="width:99px;margin-left:4px">100,0 %</q-spin></div>
      <div class="r" style="margin-top:2px"><label style="width:47px">Color</label><div class="color"><i></i></div><div class="cd"><i></i></div></div>
      <div class="r" style="margin-top:7px"><label style="width:56px">Size</label><q-spin style="width:337px">2,00000</q-spin><span style="margin-left:9px;display:flex">${DD}</span></div>
      <div class="r" style="margin-top:10px"><label style="width:56px">Rotation</label><q-spin style="width:337px">0,00 °</q-spin><span style="margin-left:9px;display:flex">${DD}</span></div>
      <hr style="width:429px;margin-top:6px">
      <div class="r" style="margin-top:7px">
        <div class="search"><svg width="30" height="20" viewBox="0 0 30 20" style="flex:none"><circle cx="14" cy="9" r="4.5" fill="none" stroke="#888" stroke-width="1.3"/><path d="M17 12l4 4" stroke="#888" stroke-width="1.3"/></svg><span>Showcase</span><svg width="16" height="12" viewBox="0 0 16 12" style="flex:none;margin-right:7px"><path d="M1 6l4-5h10v10H5z" fill="#999"/><path d="M7 3l5 6M12 3l-5 6" stroke="#fff" stroke-width="1.4"/></svg><span class="dd" style="flex:none"><i></i></span></div>
        <svg width="16" height="18" viewBox="0 0 24 24" style="margin-left:8px"><circle cx="7" cy="6" r="5" fill="#c1562b"/><path d="M14 10l8-8" stroke="#3a6ea5" stroke-width="2.5"/><rect x="2" y="13" width="9" height="9" fill="#7fb08a"/><text x="14" y="22" font-size="11" fill="#333">a</text></svg>
      </div>
      <div class="list">
        <div class="item"><svg viewBox="0 0 36 36"><defs><filter id="s" x="-50%" y="-50%" width="200%" height="200%"><feGaussianBlur stdDeviation="2"/></filter></defs><polygon points="${BURST}" fill="#555" opacity=".7" filter="url(#s)" transform="translate(2,2)"/><polygon points="${BURST}" fill="#f3000a"/></svg>effect drop shadow</div>
        <div class="item"><svg viewBox="0 0 36 36"><path d="M18 5l11.5 6.5v13L18 31 6.5 24.5v-13z" fill="#fff" stroke="#f58535" stroke-width="3"/><path d="M18 13l4.5 2.5v5L18 23l-4.500-2.500v-5z" fill="#fbb07a"/></svg>honeycomb faux 3d</div>
        <div class="item"><svg viewBox="0 0 36 36"><rect x="10" y="10" width="16" height="16" rx="1" fill="#3f77bd"/><circle cx="18.5" cy="12.8" r="1.4" fill="#fff"/><path d="M18.5 15v5h3.5l1 3" fill="none" stroke="#fff" stroke-width="1.5"/><path d="M16.800 17a3.700 3.700 0 1 0 4.400 4.800" fill="none" stroke="#fff" stroke-width="1.5"/></svg>shield disability</div>
      </div>
      <div class="foot">
        <span class="vb on"><svg width="16" height="16" viewBox="0 0 16 16"><g fill="#6f9fd6"><rect x="1" y="1" width="3.5" height="3.5"/><rect x="6" y="1" width="3.5" height="3.5"/><rect x="11" y="1" width="3.5" height="3.5"/><rect x="1" y="6" width="3.5" height="3.5"/><rect x="6" y="6" width="3.5" height="3.5"/><rect x="11" y="6" width="3.5" height="3.5"/><rect x="1" y="11" width="3.5" height="3.5"/><rect x="6" y="11" width="3.5" height="3.5"/><rect x="11" y="11" width="3.5" height="3.5"/></g></svg></span>
        <span class="vb"><svg width="16" height="16" viewBox="0 0 16 16"><rect x="1" y="1" width="14" height="14" fill="#dce8f5" stroke="#6f9fd6"/><path d="M1 4.5h14M5 4.5V15M1 8h14M1 11.5h14" stroke="#6f9fd6"/></svg></span>
        <span style="flex:1"></span>
        <q-button style="width:96px">Save Symbol...</q-button>
        <q-button style="width:81px;margin-left:6px">Advanced <svg width="8" height="6" viewBox="0 0 8 6"><path d="M1 1h6L4 5z" fill="#444"/></svg></q-button>
      </div>
      <div class="lr"><i></i>Layer Rendering</div>
      <div class="act" style="width:437px">
        <q-button style="width:24px"><svg width="15" height="14" viewBox="0 0 15 14"><path d="M7 1L1 6l6 5V8c3 0 5 1 5 4 2-2 3-5 1-7S9 3 7 3z" fill="#e58632"/></svg></q-button>
        <q-button style="width:24px;margin-left:6px"><svg width="15" height="14" viewBox="0 0 15 14"><path d="M8 1l6 5-6 5V8c-3 0-5 1-5 4-2-2-3-5-1-7s4-2 6-2z" fill="#62a86d"/></svg></q-button>
        <span style="flex:1"></span>
        <q-check checked></q-check><span style="margin-left:6px;margin-right:13px">Live update</span>
        <q-button style="width:80px">Apply</q-button>
      </div>
    </div>
  </div>
  <div class="tabs"><div class="tab a">Layer Styling</div><div class="tab b">Processing Toolbox</div></div>
`);

define('q-statusbar', `
  :host { display: flex; align-items: center; box-sizing: border-box; height: 30px; padding-left: 5px; background: #ececec; border-top: 1px solid #c4c4c4; font-size: 12px; color: #333; white-space: nowrap; }
  .loc { display: flex; align-items: center; width: 210px; height: 23px; box-sizing: border-box; background: #fff; border: 1px solid #b9b9b9; border-radius: 3px; color: #777; font-size: 13px; gap: 7px; padding-left: 9px; flex: none; }
  .l { flex: none; display: block; }
  q-input, q-spin, q-combo { height: 21px; font-size: 12px; color: #222; }
`, `
  <div class="loc"><svg width="14" height="14" viewBox="0 0 14 14"><circle cx="6" cy="6" r="4.5" fill="none" stroke="#777" stroke-width="1.2"/><path d="M9 9l4 4" stroke="#777" stroke-width="1.2"/></svg>Type to locate (⌘K)</div>
  <span class="l" style="margin-left:841px;width:61px">Coordinate</span>
  <q-input style="width:91px;justify-content:center">89.904,24.677</q-input>
  <svg width="16" height="18" viewBox="0 0 16 18" style="margin-left:4px;flex:none"><path d="M4 2l7 13M8 1l2 6M3 6l6 8M12 2l-5 13" stroke="#333" stroke-width="1.4" fill="none"/></svg>
  <span class="l" style="margin-left:14px;width:33px">Scale</span>
  <q-combo style="width:93px;border-radius:2px">1:465476</q-combo>
  <svg width="12" height="18" viewBox="0 0 12 18" style="margin-left:12px;flex:none"><rect x="1" y="8" width="10" height="9" rx="1" fill="#555"/><path d="M3 8V5a3 3 0 0 1 6 0v3" fill="none" stroke="#777" stroke-width="1.5"/></svg>
  <span class="l" style="margin-left:9px;width:52px">Magnifier</span>
  <q-spin style="width:88px">100%</q-spin>
  <span class="l" style="margin-left:10px;width:53px">Rotation</span>
  <q-spin style="width:90px">0,0 °</q-spin>
  <q-check checked style="margin-left:8px;width:13px;height:13px"></q-check>
  <span class="l" style="margin-left:6px;width:52px">Render</span>
  <svg width="16" height="16" viewBox="0 0 22 20" style="flex:none;margin-right:1px"><circle cx="11" cy="10" r="9" fill="#ddd" stroke="#666"/><path d="M2 10h18M11 1v18M4 5c4 2 10 2 14 0M4 15c4-2 10-2 14 0M11 1c-6 4-6 14 0 18M11 1c6 4 6 14 0 18" fill="none" stroke="#666" stroke-width=".8"/></svg>
  <span class="l" style="margin-left:2px;width:82px">EPSG:4326</span>
  <svg width="17" height="16" viewBox="0 0 17 16" style="flex:none"><path d="M8.5 1C13 1 16 3.5 16 7s-3 6-7 6l-1 0-1 3-2-3.600C3 11.500 1 9.500 1 7c0-3.500 3-6 7.500-6z" fill="#555"/><circle cx="5" cy="7" r="1" fill="#fff"/><circle cx="8.5" cy="7" r="1" fill="#fff"/><circle cx="12" cy="7" r="1" fill="#fff"/></svg>
`);
</script>
</body>
</html>
